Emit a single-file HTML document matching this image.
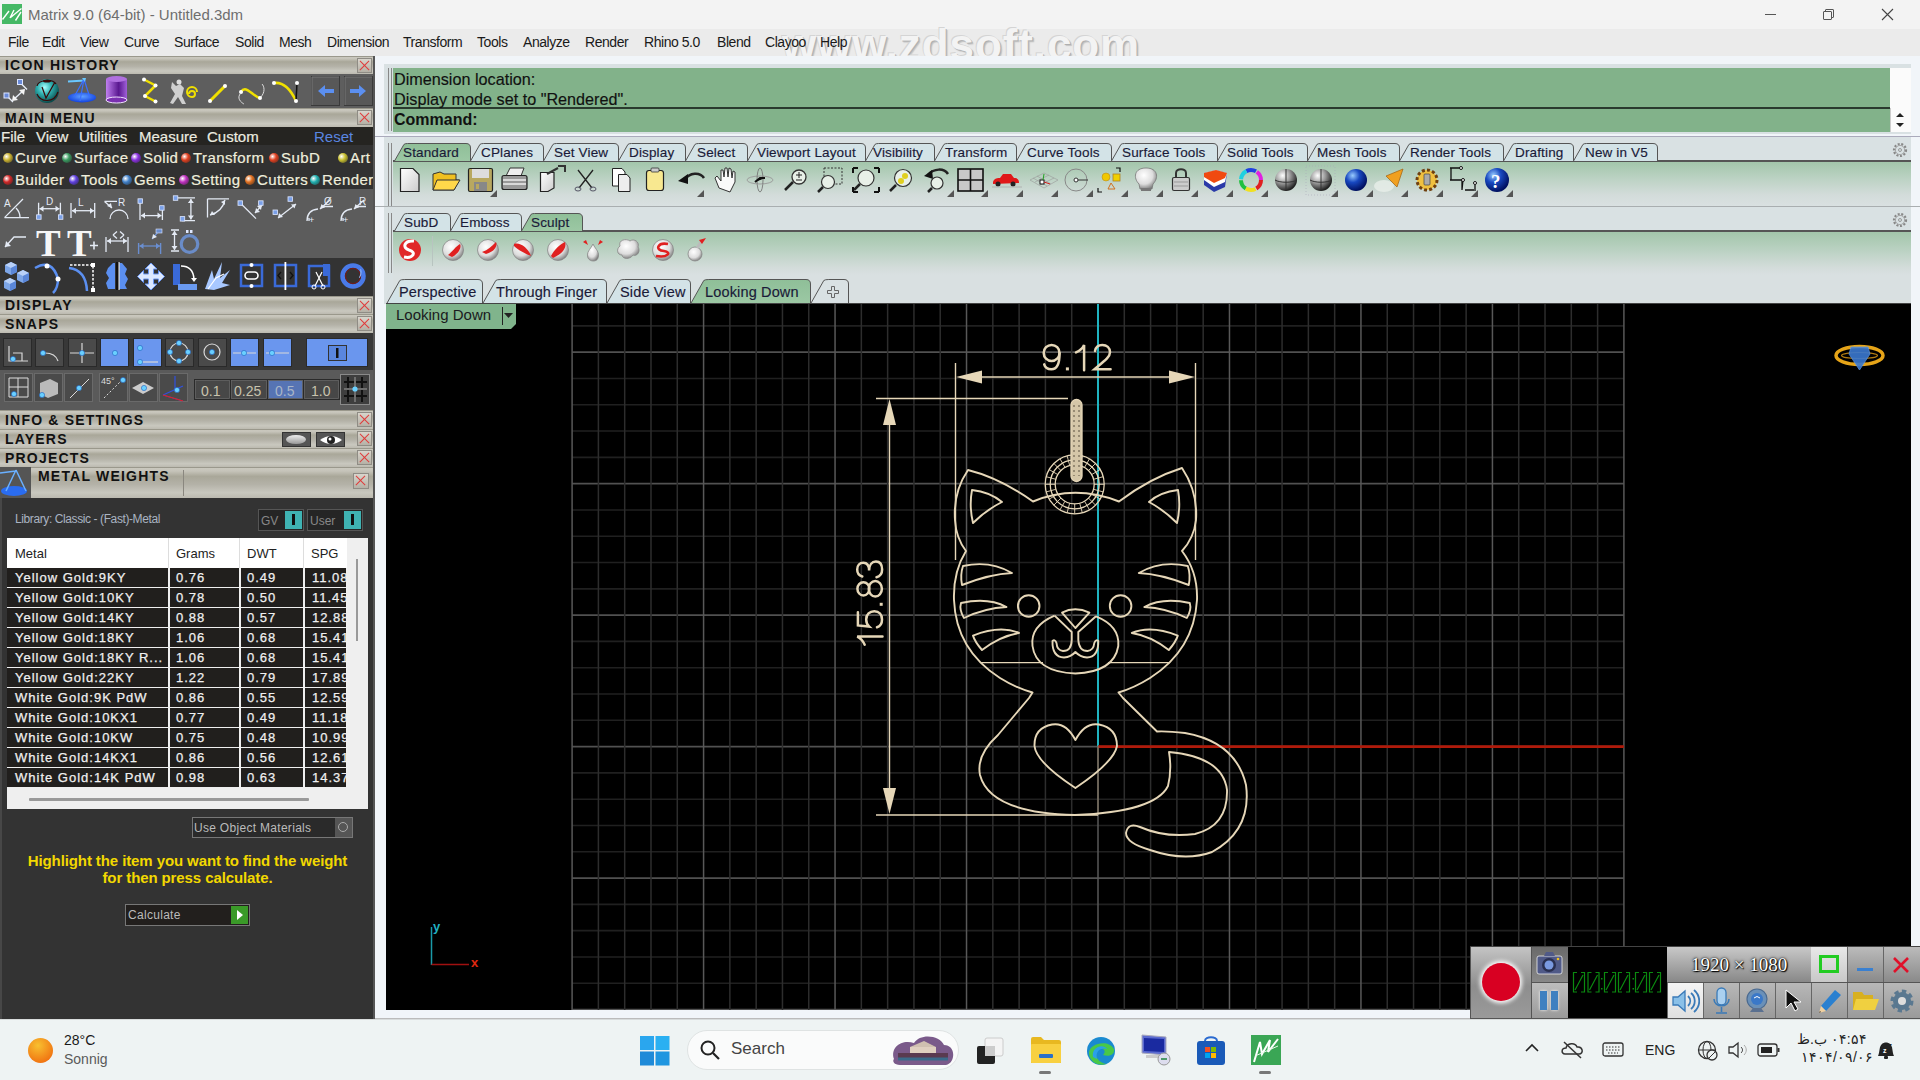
<!DOCTYPE html>
<html><head><meta charset="utf-8">
<style>
*{margin:0;padding:0;box-sizing:border-box}
html,body{width:1920px;height:1080px;overflow:hidden;background:#f3f3f3;font-family:"Liberation Sans",sans-serif;position:relative}
.a{position:absolute}
.t{position:absolute;white-space:nowrap}
.hdr{position:absolute;left:0;width:375px;background:linear-gradient(#cac8be 0,#c6c4ba 10%,#a9a799 28%,#b4b2a8 55%,#c9c8bf 82%,#bcbab0 100%);font-weight:bold;font-size:14px;color:#111;padding-left:5px;letter-spacing:1.2px;border-top:1px solid #9a988c}
.xb{position:absolute;width:15px;height:15px;border:1px solid #8f8c85;background:linear-gradient(#d8d5cc,#b5b1a6)}
.xb:before,.xb:after{content:"";position:absolute;left:0px;top:6px;width:13px;height:1.2px;background:#e03a3a;transform:rotate(45deg)}
.xb:after{transform:rotate(-45deg)}
.mi{position:absolute;top:34px;font-size:14px;letter-spacing:-0.45px;color:#1a1a1a}
</style></head><body>
<div class="a" style="left:0;top:0;width:1920px;height:29px;background:#f3f3f3"></div>
<svg class="a" style="left:0;top:0" width="26" height="28"><rect x="2" y="4" width="20" height="20" fill="#45b865"/><path d="M2.5 19.5 L9 11 M10 18 L14 10 M10.5 17.5 L21.5 8.5 M15.5 20.5 L21 12" stroke="#fff" stroke-width="1.4" fill="none"/></svg>
<div class="t" style="left:28px;top:6px;font-size:15px;color:#6e6e6e">Matrix 9.0 (64-bit) - Untitled.3dm</div>
<div class="a" style="left:1765px;top:14px;width:11px;height:1px;background:#555"></div>
<div class="a" style="left:1825px;top:9px;width:9px;height:9px;border:1px solid #555;border-radius:1px"></div>
<div class="a" style="left:1823px;top:11px;width:9px;height:9px;border:1px solid #555;background:#f3f3f3;border-radius:1px"></div>
<svg class="a" style="left:1881px;top:8px" width="13" height="13"><path d="M1 1L12 12M12 1L1 12" stroke="#444" stroke-width="1.1"/></svg>
<div class="a" style="left:0;top:29px;width:1920px;height:27px;background:#ebebeb"></div>
<div class="t" style="left:782px;top:20px;font-size:44px;font-weight:bold;color:#f3f3f3;letter-spacing:0.9px;text-shadow:1px 1px 0 #b0b0b0,-1px -1px 0 #d4d4d4,2px 2px 1px #c4c4c4">www.zdsoft.com</div>
<div class="mi" style="left:8px">File</div>
<div class="mi" style="left:42px">Edit</div>
<div class="mi" style="left:80px">View</div>
<div class="mi" style="left:124px">Curve</div>
<div class="mi" style="left:174px">Surface</div>
<div class="mi" style="left:235px">Solid</div>
<div class="mi" style="left:279px">Mesh</div>
<div class="mi" style="left:327px">Dimension</div>
<div class="mi" style="left:403px">Transform</div>
<div class="mi" style="left:477px">Tools</div>
<div class="mi" style="left:523px">Analyze</div>
<div class="mi" style="left:585px">Render</div>
<div class="mi" style="left:644px">Rhino 5.0</div>
<div class="mi" style="left:717px">Blend</div>
<div class="mi" style="left:765px">Clayoo</div>
<div class="mi" style="left:820px">Help</div>
<div class="a" style="left:0;top:56px;width:375px;height:963px;background:#333"></div>
<div class="hdr" style="top:56px;height:18px;line-height:17px">ICON HISTORY</div><div class="xb" style="left:357px;top:58px"></div>
<div class="a" style="left:0;top:74px;width:375px;height:34px;background:#5e5e5e"></div>
<svg class="a" style="left:0;top:74px" width="375" height="34">
<defs><radialGradient id="tealg" cx="40%" cy="35%" r="65%"><stop offset="0" stop-color="#a8ffff"/><stop offset="0.45" stop-color="#30b0b0"/><stop offset="1" stop-color="#0a4a4a"/></radialGradient>
<linearGradient id="purg" x1="0" x2="1"><stop offset="0" stop-color="#c080f0"/><stop offset="0.6" stop-color="#5a1890"/><stop offset="1" stop-color="#a060d8"/></linearGradient>
<radialGradient id="blug" cx="50%" cy="40%" r="60%"><stop offset="0" stop-color="#60a0ff"/><stop offset="1" stop-color="#1040e0"/></radialGradient></defs>
<g stroke="#e8eef8" stroke-width="1.4" fill="none"><path d="M13 26 L24 16"/><path d="M21 9.5 L27 15.5 M8 23 L13 28"/></g>
<path d="M12 27 l1 -6 l5 5Z M25 15 l-6 1 l5 5Z" fill="#f4f4f4"/>
<rect x="17.5" y="5.5" width="5" height="5" fill="#6a8ad8" stroke="#dde6ff"/><rect x="4" y="19" width="5" height="5" fill="#6a8ad8" stroke="#dde6ff"/>
<circle cx="47" cy="17" r="12" fill="url(#tealg)"/><path d="M37 12 C38 6, 52 4, 56 10 M42 13 L46 24 L55 8 M37 20 C40 28, 54 30, 58 18" stroke="#3a0808" stroke-width="1.2" fill="none"/><ellipse cx="47" cy="7" rx="4" ry="1.5" fill="#3a0808"/>
<ellipse cx="82" cy="23.5" rx="14" ry="5" fill="url(#blug)"/><path d="M68 7.5 L85 6.5" stroke="#6ac8ff" stroke-width="2.2"/><path d="M84 5 L74 23 M84 5 L90 24 M84 5 L80 27" stroke="#3a70ff" stroke-width="1.2" fill="none"/><path d="M82 4 L86 4 L85 8Z" fill="#6ac8ff"/>
<rect x="106" y="5" width="21" height="21" fill="url(#purg)"/><ellipse cx="116.5" cy="5" rx="10.5" ry="3" fill="#b070e0"/><ellipse cx="116.5" cy="26" rx="10.5" ry="3" fill="#7a30b0" stroke="#f0e0ff" stroke-width="1"/>
<path d="M144 5.5 L155.5 11.5 L145 22 L155.5 27.5" stroke="#f0e000" stroke-width="2.5" fill="none"/><circle cx="144" cy="5.5" r="2" fill="#fff"/><circle cx="155.5" cy="11.5" r="2" fill="#fff"/><circle cx="145" cy="22" r="2" fill="#fff"/><circle cx="155.5" cy="27.5" r="2" fill="#fff"/>
<path d="M172 8 L176 12 L180 10 L184 14 L182 22 L186 30 L182 30 L178 23 L173 30 L170 29 L175 20 L171 14Z" fill="#cfcfcf"/><circle cx="179" cy="8" r="2.5" fill="#ddd"/><path d="M192 20 m-3 0 a3 3 0 1 1 3 3 a5 5 0 1 1 5 -5" stroke="#f0e000" stroke-width="2" fill="none"/>
<path d="M210 27 L225 12" stroke="#f0e000" stroke-width="3"/><circle cx="210" cy="27" r="2" fill="#fff"/><circle cx="225" cy="12" r="2" fill="#fff"/>
<path d="M241 18 C246 10, 252 22, 260 24" stroke="#f0e000" stroke-width="2.5" fill="none"/><path d="M240 20 C236 26, 244 30, 244 30 M260 24 C266 18, 264 12, 262 10" stroke="#ddd" stroke-width="1" fill="none"/><circle cx="241" cy="18" r="2" fill="#fff"/><circle cx="260" cy="24" r="2" fill="#fff"/>
<path d="M274 9 C282 8, 290 14, 296 27" stroke="#f0e000" stroke-width="2.5" fill="none"/><path d="M297 9 L296 27" stroke="#111" stroke-width="1.5"/><circle cx="274" cy="9" r="2" fill="#fff"/><circle cx="297" cy="9" r="2" fill="#fff"/><circle cx="296" cy="27" r="2" fill="#fff"/>
<rect x="311.5" y="2.5" width="28" height="29" fill="#585858" stroke="#3a3a3a"/><rect x="344.5" y="2.5" width="28" height="29" fill="#585858" stroke="#3a3a3a"/>
<path d="M312 3 H339 M312 3 V31" stroke="#777" stroke-width="1"/><path d="M345 3 H372 M345 3 V31" stroke="#777" stroke-width="1"/>
<path d="M318 17 L325 11 L325 15 L334 15 L334 19 L325 19 L325 23 Z" fill="#5b8ff0"/>
<path d="M366 17 L359 11 L359 15 L350 15 L350 19 L359 19 L359 23 Z" fill="#5b8ff0"/>
</svg>
<div class="hdr" style="top:108px;height:19px;line-height:18px"><span style="font-family:'Liberation Sans';font-weight:900;font-size:14px;letter-spacing:1.1px">MAIN MENU</span></div><div class="xb" style="left:357px;top:110px"></div>
<div class="a" style="left:0;top:127px;width:375px;height:18px;background:#252421"></div>
<div class="t" style="left:1px;top:128px;font-size:15px;color:#ecece0;-webkit-text-stroke:0.2px #ecece0">File</div>
<div class="t" style="left:36px;top:128px;font-size:15px;color:#ecece0;-webkit-text-stroke:0.2px #ecece0">View</div>
<div class="t" style="left:79px;top:128px;font-size:15px;color:#ecece0;-webkit-text-stroke:0.2px #ecece0">Utilities</div>
<div class="t" style="left:139px;top:128px;font-size:15px;color:#ecece0;-webkit-text-stroke:0.2px #ecece0">Measure</div>
<div class="t" style="left:207px;top:128px;font-size:15px;color:#ecece0;-webkit-text-stroke:0.2px #ecece0">Custom</div>
<div class="t" style="left:314px;top:128px;font-size:15px;color:#5a86e0">Reset</div>
<div class="a" style="left:0;top:145px;width:375px;height:44px;background:#313131"></div>
<div class="a" style="left:3px;top:153px;width:10px;height:10px;border-radius:50%;background:radial-gradient(circle at 35% 35%,#fff 0,#c8b030 40%,#222 110%)"></div>
<div class="t" style="left:15px;top:149px;font-size:15px;letter-spacing:0.4px;color:#efeedc;-webkit-text-stroke:0.2px #efeedc">Curve</div>
<div class="a" style="left:62px;top:153px;width:10px;height:10px;border-radius:50%;background:radial-gradient(circle at 35% 35%,#fff 0,#3a9a60 40%,#222 110%)"></div>
<div class="t" style="left:74px;top:149px;font-size:15px;letter-spacing:0.4px;color:#efeedc;-webkit-text-stroke:0.2px #efeedc">Surface</div>
<div class="a" style="left:131px;top:153px;width:10px;height:10px;border-radius:50%;background:radial-gradient(circle at 35% 35%,#fff 0,#8a30e0 40%,#222 110%)"></div>
<div class="t" style="left:143px;top:149px;font-size:15px;letter-spacing:0.4px;color:#efeedc;-webkit-text-stroke:0.2px #efeedc">Solid</div>
<div class="a" style="left:181px;top:153px;width:10px;height:10px;border-radius:50%;background:radial-gradient(circle at 35% 35%,#fff 0,#e04020 40%,#222 110%)"></div>
<div class="t" style="left:193px;top:149px;font-size:15px;letter-spacing:0.4px;color:#efeedc;-webkit-text-stroke:0.2px #efeedc">Transform</div>
<div class="a" style="left:269px;top:153px;width:10px;height:10px;border-radius:50%;background:radial-gradient(circle at 35% 35%,#fff 0,#e04020 40%,#222 110%)"></div>
<div class="t" style="left:281px;top:149px;font-size:15px;letter-spacing:0.4px;color:#efeedc;-webkit-text-stroke:0.2px #efeedc">SubD</div>
<div class="a" style="left:338px;top:153px;width:10px;height:10px;border-radius:50%;background:radial-gradient(circle at 35% 35%,#fff 0,#c8c030 40%,#222 110%)"></div>
<div class="t" style="left:350px;top:149px;font-size:15px;letter-spacing:0.4px;color:#efeedc;-webkit-text-stroke:0.2px #efeedc">Art</div>
<div class="a" style="left:3px;top:175px;width:10px;height:10px;border-radius:50%;background:radial-gradient(circle at 35% 35%,#fff 0,#d02828 40%,#222 110%)"></div>
<div class="t" style="left:15px;top:171px;font-size:15px;letter-spacing:0.4px;color:#efeedc;-webkit-text-stroke:0.2px #efeedc">Builder</div>
<div class="a" style="left:69px;top:175px;width:10px;height:10px;border-radius:50%;background:radial-gradient(circle at 35% 35%,#fff 0,#6040e0 40%,#222 110%)"></div>
<div class="t" style="left:81px;top:171px;font-size:15px;letter-spacing:0.4px;color:#efeedc;-webkit-text-stroke:0.2px #efeedc">Tools</div>
<div class="a" style="left:122px;top:175px;width:10px;height:10px;border-radius:50%;background:radial-gradient(circle at 35% 35%,#fff 0,#4080c8 40%,#222 110%)"></div>
<div class="t" style="left:134px;top:171px;font-size:15px;letter-spacing:0.4px;color:#efeedc;-webkit-text-stroke:0.2px #efeedc">Gems</div>
<div class="a" style="left:179px;top:175px;width:10px;height:10px;border-radius:50%;background:radial-gradient(circle at 35% 35%,#fff 0,#c030c0 40%,#222 110%)"></div>
<div class="t" style="left:191px;top:171px;font-size:15px;letter-spacing:0.4px;color:#efeedc;-webkit-text-stroke:0.2px #efeedc">Setting</div>
<div class="a" style="left:245px;top:175px;width:10px;height:10px;border-radius:50%;background:radial-gradient(circle at 35% 35%,#fff 0,#e07020 40%,#222 110%)"></div>
<div class="t" style="left:257px;top:171px;font-size:15px;letter-spacing:0.4px;color:#efeedc;-webkit-text-stroke:0.2px #efeedc">Cutters</div>
<div class="a" style="left:310px;top:175px;width:10px;height:10px;border-radius:50%;background:radial-gradient(circle at 35% 35%,#fff 0,#20b0b0 40%,#222 110%)"></div>
<div class="t" style="left:322px;top:171px;font-size:15px;letter-spacing:0.4px;color:#efeedc;-webkit-text-stroke:0.2px #efeedc">Render</div>
<div class="a" style="left:0;top:189px;width:375px;height:69px;background:#5c5c5c"></div>
<div class="a" style="left:0;top:258px;width:375px;height:38px;background:#333"></div>
<svg class="a" style="left:0;top:189px" width="375" height="107"><g transform="translate(0,-189)"><g stroke="#e4eaf4" stroke-width="1.3" fill="none"><path d="M4.5 217.6 H29 M4.5 217.6 L23 199 M16 208 Q20 212 20 217.6"/><path d="M38.6 202.8 V218.6 M60.4 202.8 V218.6"/><path d="M71 203 V218 M94.7 203 V218"/><path d="M104.5 201.4 H117 M104.5 201.4 L112 208 M110 219 A8.5 8.5 0 0 1 128 219"/><path d="M140 203 V220 M162.4 207.7 V220"/><path d="M176 197.8 H195 M182 220.6 H195"/><path d="M207.5 198.8 V217.6 M207.5 198.8 H229 M210 215 Q222 212 225 200"/><path d="M240 202.8 L256 218.6"/><path d="M307 221 Q307 210 318 209 M309 221 V218 M341 221 Q341 210 352 209 M343 221 V218 M322 206.5 H333 M356 206.5 H366"/><path d="M5 247 L14 237 H26"/><path d="M106 237 V252 M128 237 V252 M113 235 L117 231.5 M113 235 L117 238.5 M124 235 L120 231.5 M124 235 L120 238.5"/><path d="M171 230 H179 M171 251 H179"/></g><path d="M39.5 208.7 H59.5" stroke="#e4eaf4" stroke-width="1.3"/><path d="M39.5 208.7 l4 -3 v6Z M59.5 208.7 l-4 -3 v6Z" fill="#e4eaf4"/><path d="M72 210.7 H94" stroke="#e4eaf4" stroke-width="1.3"/><path d="M72 210.7 l4 -3 v6Z M94 210.7 l-4 -3 v6Z" fill="#e4eaf4"/><path d="M141 215.6 H161.5" stroke="#e4eaf4" stroke-width="1.3"/><path d="M141 215.6 l4 -3 v6Z M161.5 215.6 l-4 -3 v6Z" fill="#e4eaf4"/><path d="M190.9 199 V219.6" stroke="#e4eaf4" stroke-width="1.3"/><path d="M190.9 199 l-3 4 h6Z M190.9 219.6 l-3 -4 h6Z" fill="#e4eaf4"/><path d="M112 208 l-1 -5 l-4 3Z" fill="#e4eaf4"/><path d="M210 215 l5 0 l-3 -4Z M225 200 l-4 2 l4 3Z" fill="#e4eaf4"/><path d="M255 213 L262 205" stroke="#e4eaf4" stroke-width="1.3"/><path d="M262 205 l-5 1 l4 4Z M255 213 l1 -5 l4 4Z" fill="#e4eaf4"/><path d="M278 218 L296 204" stroke="#e4eaf4" stroke-width="1.3"/><path d="M296 204 l-5 0.5 l3.5 4Z M278 218 l1 -5 l4 4Z" fill="#e4eaf4"/><path d="M320 209 L330 200" stroke="#e4eaf4" stroke-width="1.3"/><path d="M320 209 l1.5 -5 l3.5 3.5Z" fill="#e4eaf4"/><path d="M354 209 L364 200" stroke="#e4eaf4" stroke-width="1.3"/><path d="M354 209 l1.5 -5 l3.5 3.5Z" fill="#e4eaf4"/><rect x="36.6" y="214.8" width="4.5" height="4.5" fill="#7aa0e8" stroke="#dfe8ff" stroke-width="0.8"/><rect x="58.4" y="214.8" width="4.5" height="4.5" fill="#7aa0e8" stroke="#dfe8ff" stroke-width="0.8"/><rect x="138" y="198.8" width="4.5" height="4.5" fill="#7aa0e8" stroke="#dfe8ff" stroke-width="0.8"/><rect x="159.6" y="205.7" width="4.5" height="4.5" fill="#7aa0e8" stroke="#dfe8ff" stroke-width="0.8"/><rect x="173.3" y="195.8" width="4.5" height="4.5" fill="#7aa0e8" stroke="#dfe8ff" stroke-width="0.8"/><rect x="180.2" y="216.6" width="4.5" height="4.5" fill="#7aa0e8" stroke="#dfe8ff" stroke-width="0.8"/><rect x="238" y="200.8" width="4.5" height="4.5" fill="#7aa0e8" stroke="#dfe8ff" stroke-width="0.8"/><rect x="258.6" y="200.8" width="4.5" height="4.5" fill="#7aa0e8" stroke="#dfe8ff" stroke-width="0.8"/><rect x="273" y="210" width="4.5" height="4.5" fill="#7aa0e8" stroke="#dfe8ff" stroke-width="0.8"/><rect x="288" y="196.8" width="4.5" height="4.5" fill="#7aa0e8" stroke="#dfe8ff" stroke-width="0.8"/><g fill="#e4eaf4" font-family="Liberation Sans" font-size="10"><text x="4" y="207">A</text><text x="46" y="205">D</text><text x="78" y="206">L</text><text x="118" y="206">R</text><text x="324" y="205">Ø</text><text x="359" y="205">R</text><text x="309" y="223" font-size="9">+</text><text x="343" y="223" font-size="9">+</text></g><path d="M5 247 l1 -6 l5 5Z" fill="#e4eaf4"/><g fill="#f6f6f6" font-family="Liberation Serif" font-weight="bold"><text x="36" y="256" font-size="37">T</text><text x="67" y="256" font-size="37">T</text></g><path d="M90 245.5 H98 M94 241.5 V249.5" stroke="#e4eaf4" stroke-width="1.6"/><path d="M107 241 H127" stroke="#e4eaf4" stroke-width="1.3"/><path d="M107 241 l4 -3 v6Z M127 241 l-4 -3 v6Z" fill="#e4eaf4"/><path d="M138.6 243 V254 M160.6 243 V254 M152 239 L158 232" stroke="#6a8ed0" stroke-width="1.4"/><path d="M139.5 246 H160" stroke="#6a8ed0" stroke-width="1.3"/><path d="M139.5 246 l4 -3 v6Z M160 246 l-4 -3 v6Z" fill="#6a8ed0"/><rect x="156" y="229" width="6" height="4" fill="#6a8ed0" stroke="#dfe8ff" stroke-width="0.6"/><path d="M152 239 l1 -5 l4 3Z" fill="#e4eaf4"/><path d="M174.5 231 V250" stroke="#e4eaf4" stroke-width="1.3"/><path d="M174.5 231 l-3 4 h6Z M174.5 250 l-3 -4 h6Z" fill="#e4eaf4"/><circle cx="189.5" cy="244" r="8.3" fill="none" stroke="#6a8cc8" stroke-width="3.2"/><rect x="186" y="230" width="2.5" height="3" fill="#dfe8ff"/><rect x="190" y="230" width="2.5" height="3" fill="#dfe8ff"/><g transform="translate(0,0)"><path d="M5 265 L11 262 L17 265 L17 272 L11 275 L5 272Z" fill="#7da6e8"/><path d="M5 265 L11 262 L17 265 L11 268Z" fill="#b8d0f8"/><path d="M11 268 L17 265 L17 272 L11 275Z" fill="#5a86d8"/><path d="M17 273 L23 270 L29 273 L29 280 L23 283 L17 280Z" fill="#7da6e8"/><path d="M17 273 L23 270 L29 273 L23 276Z" fill="#b8d0f8"/><path d="M23 276 L29 273 L29 280 L23 283Z" fill="#5a86d8"/><path d="M4 281 L10 278 L16 281 L16 288 L10 291 L4 288Z" fill="#7da6e8"/><path d="M4 281 L10 278 L16 281 L10 284Z" fill="#b8d0f8"/><path d="M10 284 L16 281 L16 288 L10 291Z" fill="#5a86d8"/><path d="M35 268 Q52 258 58 279 Q58 288 53 293" stroke="#5b8ff0" stroke-width="2.5" fill="none"/><circle cx="47" cy="266" r="2.5" fill="#fff"/><circle cx="58" cy="279" r="2.5" fill="#fff"/><path d="M69 268 Q86 270 87 291" stroke="#5b8ff0" stroke-width="2.5" fill="none"/><path d="M70 265 H93 V290" stroke="#fff" stroke-width="1.5" stroke-dasharray="2.5 1.5" fill="none"/><rect x="91" y="263" width="4" height="4" fill="#fff"/><rect x="91" y="288" width="4" height="4" fill="#fff"/><path d="M108 268 L113 263 L115 263 L115 289 L108 289 L106 283 L109 278 L106 273Z M119 263 L122 263 L127 269 L125 274 L128 279 L125 285 L127 289 L119 289Z" fill="#5b8ff0"/><rect x="116" y="262" width="2.2" height="28" fill="#111"/><rect x="118.5" y="262" width="1.2" height="28" fill="#ddd"/><path d="M151 263 L157 269 L153.5 269 L153.5 274 L158.5 274 L158.5 270.5 L164.5 276.5 L158.5 282.5 L158.5 279 L153.5 279 L153.5 284 L157 284 L151 290 L145 284 L148.5 284 L148.5 279 L143.5 279 L143.5 282.5 L137.5 276.5 L143.5 270.5 L143.5 274 L148.5 274 L148.5 269 L145 269Z" fill="#dce8ff" stroke="#6a96f0" stroke-width="1"/><rect x="173" y="264" width="7" height="21" fill="#3a6ad8"/><rect x="178" y="284" width="19" height="6" fill="#6a9af0"/><path d="M181 266 Q193 266 194 279" stroke="#fff" stroke-width="1.5" fill="none"/><path d="M194 282 l-3 -4 h6Z" fill="#fff"/><path d="M205 289 L212 270 L214 279 L222 262 L220 278 L230 270 L222 283 L230 285 L214 290Z" fill="#a8c8ff"/><path d="M208 289 L216 278 L224 274" stroke="#fff" stroke-width="1.2" fill="none"/><rect x="241" y="265" width="21" height="21" fill="none" stroke="#3a6ad8" stroke-width="2.5"/><rect x="245" y="272" width="13" height="7" rx="3.5" fill="none" stroke="#fff" stroke-width="1.6"/><circle cx="251.5" cy="265" r="2" fill="#fff"/><circle cx="251.5" cy="286" r="2" fill="#fff"/><rect x="275" y="265" width="21" height="21" fill="none" stroke="#3a6ad8" stroke-width="2.5"/><rect x="284.5" y="262" width="1.8" height="28" fill="#fff"/><path d="M281 272 L278 275.5 L281 279 M290 272 L293 275.5 L290 279" stroke="#111" stroke-width="1.3" fill="none"/><rect x="309" y="266" width="20" height="20" fill="none" stroke="#3a6ad8" stroke-width="2.5"/><rect x="323" y="264" width="7" height="12" fill="#3a6ad8"/><path d="M316 272 L323 286 M322 272 L315 286" stroke="#fff" stroke-width="1.2"/><circle cx="314" cy="287" r="2" fill="none" stroke="#fff"/><circle cx="323" cy="287" r="2" fill="none" stroke="#fff"/><circle cx="353" cy="276" r="10.5" fill="none" stroke="#4a7ae8" stroke-width="4.5"/><circle cx="353" cy="276" r="7.5" fill="none" stroke="#7a1818" stroke-width="1"/><circle cx="350" cy="272" r="11" fill="none" stroke="#9cc0ff" stroke-width="1" stroke-dasharray="6 60"/></g></g></svg>
<div class="hdr" style="top:296px;height:18px;line-height:17px">DISPLAY</div><div class="xb" style="left:357px;top:298px"></div>
<div class="hdr" style="top:314px;height:19px;line-height:18px">SNAPS</div><div class="xb" style="left:357px;top:316px"></div>
<div class="a" style="left:0;top:333px;width:375px;height:37px;background:#383838"></div>
<div class="a" style="left:0;top:370px;width:375px;height:40px;background:#5a5a5a"></div>
<svg class="a" style="left:0;top:333px" width="375" height="77"><rect x="3.5" y="5.5" width="28" height="28" fill="#4a4a4a" stroke="#2a2a2a"/><rect x="35.5" y="5.5" width="28" height="28" fill="#4a4a4a" stroke="#2a2a2a"/><rect x="68.5" y="5.5" width="28" height="28" fill="#4a4a4a" stroke="#2a2a2a"/><rect x="100.5" y="5.5" width="28" height="28" fill="#6a96ee" stroke="#2a2a2a"/><rect x="133.5" y="5.5" width="28" height="28" fill="#6a96ee" stroke="#2a2a2a"/><rect x="165.5" y="5.5" width="28" height="28" fill="#4a4a4a" stroke="#2a2a2a"/><rect x="198.5" y="5.5" width="28" height="28" fill="#4a4a4a" stroke="#2a2a2a"/><rect x="230.5" y="5.5" width="28" height="28" fill="#6a96ee" stroke="#2a2a2a"/><rect x="263.5" y="5.5" width="28" height="28" fill="#6a96ee" stroke="#2a2a2a"/><rect x="306.5" y="5.5" width="61" height="28" fill="#6a96ee" stroke="#2a2a2a"/><rect x="328.5" y="12.5" width="18" height="15" fill="#5a86de" stroke="#333"/><rect x="336" y="15" width="2.5" height="10" fill="#111"/><g stroke="#d8d8d8" stroke-width="1.2" fill="none"><path d="M9 13 L9 28 L28 28 M13 20 L22 20 L22 28" /><path d="M45 20 C52 20, 56 22, 58 28"/><path d="M82 10 L82 30 M70 20 L94 20"/><path d="M140 29 L158 29"/><circle cx="179" cy="19" r="9"/><circle cx="212" cy="19" r="8"/><path d="M233 20 L256 20 M266 20 L289 20"/></g><circle cx="13" cy="26" r="2.6" fill="#6ad0ff" stroke="#2060c0" stroke-width="0.6"/><circle cx="43" cy="20" r="2.6" fill="#6ad0ff" stroke="#2060c0" stroke-width="0.6"/><circle cx="82" cy="20" r="2.6" fill="#6ad0ff" stroke="#2060c0" stroke-width="0.6"/><circle cx="115" cy="20" r="2.6" fill="#6ad0ff" stroke="#2060c0" stroke-width="0.6"/><circle cx="140" cy="15" r="2.6" fill="#6ad0ff" stroke="#2060c0" stroke-width="0.6"/><circle cx="140" cy="29" r="2.6" fill="#6ad0ff" stroke="#2060c0" stroke-width="0.6"/><circle cx="179" cy="10" r="2.6" fill="#6ad0ff" stroke="#2060c0" stroke-width="0.6"/><circle cx="179" cy="28" r="2.6" fill="#6ad0ff" stroke="#2060c0" stroke-width="0.6"/><circle cx="170" cy="19" r="2.6" fill="#6ad0ff" stroke="#2060c0" stroke-width="0.6"/><circle cx="188" cy="19" r="2.6" fill="#6ad0ff" stroke="#2060c0" stroke-width="0.6"/><circle cx="212" cy="19" r="2.6" fill="#6ad0ff" stroke="#2060c0" stroke-width="0.6"/><circle cx="244" cy="20" r="2.6" fill="#6ad0ff" stroke="#2060c0" stroke-width="0.6"/><circle cx="272" cy="20" r="2.6" fill="#6ad0ff" stroke="#2060c0" stroke-width="0.6"/><g transform="translate(0,37)"><rect x="4.5" y="3.5" width="28" height="28" fill="#4a4a4a" stroke="#6a6a6a"/><rect x="34.5" y="3.5" width="28" height="28" fill="#4a4a4a" stroke="#6a6a6a"/><rect x="64.5" y="3.5" width="28" height="28" fill="#4a4a4a" stroke="#6a6a6a"/><rect x="99.5" y="3.5" width="28" height="28" fill="#4a4a4a" stroke="#6a6a6a"/><rect x="129.5" y="3.5" width="28" height="28" fill="#4a4a4a" stroke="#6a6a6a"/><rect x="159.5" y="3.5" width="28" height="28" fill="#4a4a4a" stroke="#6a6a6a"/><path d="M9 8 L28 8 L28 27 L9 27 Z M18 8 L18 27 M9 17 L28 17" stroke="#ddd" fill="none"/><path d="M40 13 L50 9 L58 13 L58 24 L48 28 L40 24 Z" fill="#bbb"/><path d="M70 28 L89 9" stroke="#ddd"/><path d="M104 28 L123 9" stroke="#ddd" stroke-dasharray="2 2"/><text x="101" y="14" font-size="9" fill="#ddd" font-family="Liberation Sans">45°</text><path d="M132 18 L143 12 L154 18 L143 24 Z" fill="#ccc"/><path d="M163 25 L183 16 M163 25 L183 31 M175 6 L175 20" stroke-width="1.2" fill="none" stroke="#3050e0"/><path d="M163 25 L183 31" stroke="#e02020" stroke-width="1.3"/><circle cx="14" cy="24" r="2.6" fill="#6ad0ff" stroke="#2060c0" stroke-width="0.6"/><circle cx="42" cy="25" r="2.6" fill="#6ad0ff" stroke="#2060c0" stroke-width="0.6"/><circle cx="79" cy="18" r="2.6" fill="#6ad0ff" stroke="#2060c0" stroke-width="0.6"/><circle cx="123" cy="10" r="2.6" fill="#6ad0ff" stroke="#2060c0" stroke-width="0.6"/><circle cx="144" cy="18" r="2.6" fill="#6ad0ff" stroke="#2060c0" stroke-width="0.6"/><circle cx="177" cy="20" r="2.6" fill="#6ad0ff" stroke="#2060c0" stroke-width="0.6"/><rect x="194" y="9" width="146" height="21" fill="#2a2a2a"/><rect x="195.5" y="10.5" width="34" height="18" fill="#474747" stroke="#666" stroke-width="0.8"/><rect x="231.5" y="10.5" width="35" height="18" fill="#474747" stroke="#666" stroke-width="0.8"/><rect x="268.5" y="10.5" width="34" height="18" fill="#5674b4" stroke="#666" stroke-width="0.8"/><rect x="304.5" y="10.5" width="34" height="18" fill="#474747" stroke="#666" stroke-width="0.8"/><g font-family="Liberation Sans" font-size="14" fill="#c8c3ae"><text x="201" y="25.5">0.1</text><text x="234" y="25.5">0.25</text><text x="275" y="25.5" fill="#a9b6c8">0.5</text><text x="311" y="25.5">1.0</text></g><rect x="340.5" y="4.5" width="29" height="30" fill="#3e3e3e" stroke="#8a8a8a"/><path d="M344 12 L367 12 M344 19 L367 19 M344 26 L367 26 M348 7 L348 32 M355 7 L355 32 M362 7 L362 32" stroke="#111" stroke-width="2"/><path d="M344 19 H367 M355 7 V32" stroke="#ccc" stroke-width="1"/><circle cx="355" cy="19" r="2.6" fill="#6ad0ff"/></g></svg>
<div class="hdr" style="top:410px;height:19px;line-height:18px">INFO &amp; SETTINGS</div><div class="xb" style="left:357px;top:412px"></div>
<div class="hdr" style="top:429px;height:19px;line-height:18px">LAYERS</div><div class="xb" style="left:357px;top:431px"></div>
<div class="a" style="left:282px;top:432px;width:29px;height:15px;background:#555;border:1px solid #333"></div><div class="a" style="left:286px;top:435px;width:20px;height:9px;border-radius:50%;background:linear-gradient(#eee,#999)"></div>
<div class="a" style="left:316px;top:432px;width:29px;height:15px;background:#555;border:1px solid #333"></div><svg class="a" style="left:318px;top:433px" width="26" height="14"><path d="M2 7 Q13 -1 24 7 Q13 15 2 7Z" fill="#fff"/><circle cx="13" cy="7" r="4" fill="#222"/><circle cx="12" cy="6" r="1.5" fill="#fff"/></svg>
<div class="hdr" style="top:448px;height:19px;line-height:18px">PROJECTS</div><div class="xb" style="left:357px;top:450px"></div>
<div class="hdr" style="top:467px;height:31px;line-height:16px;padding-left:38px;font-size:14px">METAL WEIGHTS</div>
<div class="a" style="left:0;top:467px;width:31px;height:31px;background:#555"></div>
<svg class="a" style="left:0;top:467px" width="31" height="31"><ellipse cx="14" cy="24" rx="13" ry="5" fill="#2a6cf0"/><path d="M0 6 L16 4 M16 3 L6 24 M16 3 L26 24" stroke="#6ab0ff" stroke-width="1.5" fill="none"/></svg>
<div class="a" style="left:183px;top:470px;width:1px;height:26px;background:#8a877f"></div>
<div class="xb" style="left:353px;top:473px;width:16px;height:16px"></div>
<div class="a" style="left:0;top:498px;width:375px;height:521px;background:#333"></div>
<div class="a" style="left:0;top:498px;width:2px;height:521px;background:#474747"></div>
<div class="a" style="left:373px;top:56px;width:2px;height:963px;background:#555"></div>
<div class="t" style="left:15px;top:512px;font-size:12px;color:#aab4c2;letter-spacing:-0.4px">Library: Classic - (Fast)-Metal</div>
<div class="a" style="left:258px;top:509px;width:46px;height:22px;background:#252525;border:1px solid #555"></div><div class="t" style="left:261px;top:514px;font-size:12px;color:#888">GV</div><div class="a" style="left:285px;top:511px;width:17px;height:18px;background:#3fb3b3"></div><div class="a" style="left:292px;top:514px;width:3px;height:11px;background:#111"></div>
<div class="a" style="left:307px;top:509px;width:56px;height:22px;background:#252525;border:1px solid #555"></div><div class="t" style="left:310px;top:514px;font-size:12px;color:#888">User</div><div class="a" style="left:344px;top:511px;width:17px;height:18px;background:#3fb3b3"></div><div class="a" style="left:351px;top:514px;width:3px;height:11px;background:#111"></div>
<div class="a" style="left:7px;top:538px;width:361px;height:271px;background:#efefef"></div>
<div class="a" style="left:7px;top:538px;width:340px;height:30px;background:#fff"></div>
<div class="t" style="left:15px;top:546px;font-size:13px;color:#222">Metal</div>
<div class="t" style="left:176px;top:546px;font-size:13px;color:#222">Grams</div>
<div class="t" style="left:247px;top:546px;font-size:13px;color:#222">DWT</div>
<div class="t" style="left:311px;top:546px;font-size:13px;color:#222">SPG</div>
<div class="a" style="left:168px;top:538px;width:1px;height:30px;background:#ddd"></div>
<div class="a" style="left:239px;top:538px;width:1px;height:30px;background:#ddd"></div>
<div class="a" style="left:303px;top:538px;width:1px;height:30px;background:#ddd"></div>
<div class="a" style="left:7px;top:568px;width:161px;height:19px;background:#211f1d"></div>
<div class="a" style="left:170px;top:568px;width:69px;height:19px;background:#211f1d"></div>
<div class="a" style="left:241px;top:568px;width:62px;height:19px;background:#211f1d"></div>
<div class="a" style="left:305px;top:568px;width:41px;height:19px;background:#211f1d;overflow:hidden"><div class="t" style="left:7px;top:2px;font-size:13px;color:#f0f0f0;letter-spacing:1px;-webkit-text-stroke:0.25px #f0f0f0">11.08</div></div>
<div class="t" style="left:15px;top:570px;font-size:13px;color:#f0f0f0;letter-spacing:1px;-webkit-text-stroke:0.25px #f0f0f0">Yellow Gold:9KY</div>
<div class="t" style="left:176px;top:570px;font-size:13px;color:#f0f0f0;letter-spacing:1px;-webkit-text-stroke:0.25px #f0f0f0">0.76</div>
<div class="t" style="left:247px;top:570px;font-size:13px;color:#f0f0f0;letter-spacing:1px;-webkit-text-stroke:0.25px #f0f0f0">0.49</div>
<div class="a" style="left:7px;top:588px;width:161px;height:19px;background:#211f1d"></div>
<div class="a" style="left:170px;top:588px;width:69px;height:19px;background:#211f1d"></div>
<div class="a" style="left:241px;top:588px;width:62px;height:19px;background:#211f1d"></div>
<div class="a" style="left:305px;top:588px;width:41px;height:19px;background:#211f1d;overflow:hidden"><div class="t" style="left:7px;top:2px;font-size:13px;color:#f0f0f0;letter-spacing:1px;-webkit-text-stroke:0.25px #f0f0f0">11.45</div></div>
<div class="t" style="left:15px;top:590px;font-size:13px;color:#f0f0f0;letter-spacing:1px;-webkit-text-stroke:0.25px #f0f0f0">Yellow Gold:10KY</div>
<div class="t" style="left:176px;top:590px;font-size:13px;color:#f0f0f0;letter-spacing:1px;-webkit-text-stroke:0.25px #f0f0f0">0.78</div>
<div class="t" style="left:247px;top:590px;font-size:13px;color:#f0f0f0;letter-spacing:1px;-webkit-text-stroke:0.25px #f0f0f0">0.50</div>
<div class="a" style="left:7px;top:608px;width:161px;height:19px;background:#211f1d"></div>
<div class="a" style="left:170px;top:608px;width:69px;height:19px;background:#211f1d"></div>
<div class="a" style="left:241px;top:608px;width:62px;height:19px;background:#211f1d"></div>
<div class="a" style="left:305px;top:608px;width:41px;height:19px;background:#211f1d;overflow:hidden"><div class="t" style="left:7px;top:2px;font-size:13px;color:#f0f0f0;letter-spacing:1px;-webkit-text-stroke:0.25px #f0f0f0">12.88</div></div>
<div class="t" style="left:15px;top:610px;font-size:13px;color:#f0f0f0;letter-spacing:1px;-webkit-text-stroke:0.25px #f0f0f0">Yellow Gold:14KY</div>
<div class="t" style="left:176px;top:610px;font-size:13px;color:#f0f0f0;letter-spacing:1px;-webkit-text-stroke:0.25px #f0f0f0">0.88</div>
<div class="t" style="left:247px;top:610px;font-size:13px;color:#f0f0f0;letter-spacing:1px;-webkit-text-stroke:0.25px #f0f0f0">0.57</div>
<div class="a" style="left:7px;top:628px;width:161px;height:19px;background:#211f1d"></div>
<div class="a" style="left:170px;top:628px;width:69px;height:19px;background:#211f1d"></div>
<div class="a" style="left:241px;top:628px;width:62px;height:19px;background:#211f1d"></div>
<div class="a" style="left:305px;top:628px;width:41px;height:19px;background:#211f1d;overflow:hidden"><div class="t" style="left:7px;top:2px;font-size:13px;color:#f0f0f0;letter-spacing:1px;-webkit-text-stroke:0.25px #f0f0f0">15.41</div></div>
<div class="t" style="left:15px;top:630px;font-size:13px;color:#f0f0f0;letter-spacing:1px;-webkit-text-stroke:0.25px #f0f0f0">Yellow Gold:18KY</div>
<div class="t" style="left:176px;top:630px;font-size:13px;color:#f0f0f0;letter-spacing:1px;-webkit-text-stroke:0.25px #f0f0f0">1.06</div>
<div class="t" style="left:247px;top:630px;font-size:13px;color:#f0f0f0;letter-spacing:1px;-webkit-text-stroke:0.25px #f0f0f0">0.68</div>
<div class="a" style="left:7px;top:648px;width:161px;height:19px;background:#211f1d"></div>
<div class="a" style="left:170px;top:648px;width:69px;height:19px;background:#211f1d"></div>
<div class="a" style="left:241px;top:648px;width:62px;height:19px;background:#211f1d"></div>
<div class="a" style="left:305px;top:648px;width:41px;height:19px;background:#211f1d;overflow:hidden"><div class="t" style="left:7px;top:2px;font-size:13px;color:#f0f0f0;letter-spacing:1px;-webkit-text-stroke:0.25px #f0f0f0">15.41</div></div>
<div class="t" style="left:15px;top:650px;font-size:13px;color:#f0f0f0;letter-spacing:1px;-webkit-text-stroke:0.25px #f0f0f0">Yellow Gold:18KY R...</div>
<div class="t" style="left:176px;top:650px;font-size:13px;color:#f0f0f0;letter-spacing:1px;-webkit-text-stroke:0.25px #f0f0f0">1.06</div>
<div class="t" style="left:247px;top:650px;font-size:13px;color:#f0f0f0;letter-spacing:1px;-webkit-text-stroke:0.25px #f0f0f0">0.68</div>
<div class="a" style="left:7px;top:668px;width:161px;height:19px;background:#211f1d"></div>
<div class="a" style="left:170px;top:668px;width:69px;height:19px;background:#211f1d"></div>
<div class="a" style="left:241px;top:668px;width:62px;height:19px;background:#211f1d"></div>
<div class="a" style="left:305px;top:668px;width:41px;height:19px;background:#211f1d;overflow:hidden"><div class="t" style="left:7px;top:2px;font-size:13px;color:#f0f0f0;letter-spacing:1px;-webkit-text-stroke:0.25px #f0f0f0">17.89</div></div>
<div class="t" style="left:15px;top:670px;font-size:13px;color:#f0f0f0;letter-spacing:1px;-webkit-text-stroke:0.25px #f0f0f0">Yellow Gold:22KY</div>
<div class="t" style="left:176px;top:670px;font-size:13px;color:#f0f0f0;letter-spacing:1px;-webkit-text-stroke:0.25px #f0f0f0">1.22</div>
<div class="t" style="left:247px;top:670px;font-size:13px;color:#f0f0f0;letter-spacing:1px;-webkit-text-stroke:0.25px #f0f0f0">0.79</div>
<div class="a" style="left:7px;top:688px;width:161px;height:19px;background:#211f1d"></div>
<div class="a" style="left:170px;top:688px;width:69px;height:19px;background:#211f1d"></div>
<div class="a" style="left:241px;top:688px;width:62px;height:19px;background:#211f1d"></div>
<div class="a" style="left:305px;top:688px;width:41px;height:19px;background:#211f1d;overflow:hidden"><div class="t" style="left:7px;top:2px;font-size:13px;color:#f0f0f0;letter-spacing:1px;-webkit-text-stroke:0.25px #f0f0f0">12.59</div></div>
<div class="t" style="left:15px;top:690px;font-size:13px;color:#f0f0f0;letter-spacing:1px;-webkit-text-stroke:0.25px #f0f0f0">White Gold:9K PdW</div>
<div class="t" style="left:176px;top:690px;font-size:13px;color:#f0f0f0;letter-spacing:1px;-webkit-text-stroke:0.25px #f0f0f0">0.86</div>
<div class="t" style="left:247px;top:690px;font-size:13px;color:#f0f0f0;letter-spacing:1px;-webkit-text-stroke:0.25px #f0f0f0">0.55</div>
<div class="a" style="left:7px;top:708px;width:161px;height:19px;background:#211f1d"></div>
<div class="a" style="left:170px;top:708px;width:69px;height:19px;background:#211f1d"></div>
<div class="a" style="left:241px;top:708px;width:62px;height:19px;background:#211f1d"></div>
<div class="a" style="left:305px;top:708px;width:41px;height:19px;background:#211f1d;overflow:hidden"><div class="t" style="left:7px;top:2px;font-size:13px;color:#f0f0f0;letter-spacing:1px;-webkit-text-stroke:0.25px #f0f0f0">11.18</div></div>
<div class="t" style="left:15px;top:710px;font-size:13px;color:#f0f0f0;letter-spacing:1px;-webkit-text-stroke:0.25px #f0f0f0">White Gold:10KX1</div>
<div class="t" style="left:176px;top:710px;font-size:13px;color:#f0f0f0;letter-spacing:1px;-webkit-text-stroke:0.25px #f0f0f0">0.77</div>
<div class="t" style="left:247px;top:710px;font-size:13px;color:#f0f0f0;letter-spacing:1px;-webkit-text-stroke:0.25px #f0f0f0">0.49</div>
<div class="a" style="left:7px;top:728px;width:161px;height:19px;background:#211f1d"></div>
<div class="a" style="left:170px;top:728px;width:69px;height:19px;background:#211f1d"></div>
<div class="a" style="left:241px;top:728px;width:62px;height:19px;background:#211f1d"></div>
<div class="a" style="left:305px;top:728px;width:41px;height:19px;background:#211f1d;overflow:hidden"><div class="t" style="left:7px;top:2px;font-size:13px;color:#f0f0f0;letter-spacing:1px;-webkit-text-stroke:0.25px #f0f0f0">10.99</div></div>
<div class="t" style="left:15px;top:730px;font-size:13px;color:#f0f0f0;letter-spacing:1px;-webkit-text-stroke:0.25px #f0f0f0">White Gold:10KW</div>
<div class="t" style="left:176px;top:730px;font-size:13px;color:#f0f0f0;letter-spacing:1px;-webkit-text-stroke:0.25px #f0f0f0">0.75</div>
<div class="t" style="left:247px;top:730px;font-size:13px;color:#f0f0f0;letter-spacing:1px;-webkit-text-stroke:0.25px #f0f0f0">0.48</div>
<div class="a" style="left:7px;top:748px;width:161px;height:19px;background:#211f1d"></div>
<div class="a" style="left:170px;top:748px;width:69px;height:19px;background:#211f1d"></div>
<div class="a" style="left:241px;top:748px;width:62px;height:19px;background:#211f1d"></div>
<div class="a" style="left:305px;top:748px;width:41px;height:19px;background:#211f1d;overflow:hidden"><div class="t" style="left:7px;top:2px;font-size:13px;color:#f0f0f0;letter-spacing:1px;-webkit-text-stroke:0.25px #f0f0f0">12.61</div></div>
<div class="t" style="left:15px;top:750px;font-size:13px;color:#f0f0f0;letter-spacing:1px;-webkit-text-stroke:0.25px #f0f0f0">White Gold:14KX1</div>
<div class="t" style="left:176px;top:750px;font-size:13px;color:#f0f0f0;letter-spacing:1px;-webkit-text-stroke:0.25px #f0f0f0">0.86</div>
<div class="t" style="left:247px;top:750px;font-size:13px;color:#f0f0f0;letter-spacing:1px;-webkit-text-stroke:0.25px #f0f0f0">0.56</div>
<div class="a" style="left:7px;top:768px;width:161px;height:19px;background:#211f1d"></div>
<div class="a" style="left:170px;top:768px;width:69px;height:19px;background:#211f1d"></div>
<div class="a" style="left:241px;top:768px;width:62px;height:19px;background:#211f1d"></div>
<div class="a" style="left:305px;top:768px;width:41px;height:19px;background:#211f1d;overflow:hidden"><div class="t" style="left:7px;top:2px;font-size:13px;color:#f0f0f0;letter-spacing:1px;-webkit-text-stroke:0.25px #f0f0f0">14.37</div></div>
<div class="t" style="left:15px;top:770px;font-size:13px;color:#f0f0f0;letter-spacing:1px;-webkit-text-stroke:0.25px #f0f0f0">White Gold:14K PdW</div>
<div class="t" style="left:176px;top:770px;font-size:13px;color:#f0f0f0;letter-spacing:1px;-webkit-text-stroke:0.25px #f0f0f0">0.98</div>
<div class="t" style="left:247px;top:770px;font-size:13px;color:#f0f0f0;letter-spacing:1px;-webkit-text-stroke:0.25px #f0f0f0">0.63</div>
<div class="a" style="left:356px;top:559px;width:2px;height:82px;background:#999"></div>
<div class="a" style="left:29px;top:798px;width:280px;height:3px;background:#999;border-radius:1px"></div>
<div class="a" style="left:192px;top:817px;width:161px;height:21px;background:#2a2a2a;border:1px solid #777"></div>
<div class="t" style="left:194px;top:821px;font-size:12px;color:#bbb;letter-spacing:0.3px">Use Object Materials</div>
<div class="a" style="left:335px;top:818px;width:17px;height:19px;background:#555"></div><div class="a" style="left:338px;top:822px;width:10px;height:10px;border-radius:50%;border:1px solid #aaa"></div>
<div class="t" style="left:0;width:375px;top:852px;text-align:center;font-size:15px;font-weight:bold;color:#f2d800;line-height:17px;letter-spacing:-0.1px">Highlight the item you want to find the weight<br>for then press calculate.</div>
<div class="a" style="left:125px;top:904px;width:125px;height:22px;background:#221f1d;border:1px solid #777"></div>
<div class="t" style="left:128px;top:908px;font-size:12px;color:#bbb;letter-spacing:0.3px">Calculate</div>
<div class="a" style="left:231px;top:906px;width:17px;height:18px;background:#3a9a28"></div><svg class="a" style="left:236px;top:910px" width="8" height="10"><path d="M1 0 L7 5 L1 10Z" fill="#fff"/></svg>
<svg width="0" height="0" style="position:absolute"><defs><linearGradient id="tg" x1="0" y1="0" x2="0" y2="1"><stop offset="0" stop-color="#8fbf98"/><stop offset="1" stop-color="#9cc8a4"/></linearGradient></defs></svg>
<div class="a" style="left:375px;top:56px;width:1545px;height:963px;background:#f1f5f9"></div>
<div class="a" style="left:384px;top:64px;width:1527px;height:70px;background:#d9e1e3"></div>
<div class="a" style="left:388px;top:68px;width:1px;height:63px;background:#888"></div><div class="a" style="left:391px;top:68px;width:1px;height:63px;background:#888"></div>
<div class="a" style="left:393px;top:68px;width:1497px;height:64px;background:#82b28a"></div>
<div class="a" style="left:393px;top:107px;width:1497px;height:2px;background:#2a3a2e"></div>
<div class="t" style="left:394px;top:69px;font-size:16.2px;color:#111;line-height:20px;-webkit-text-stroke:0.15px #111">Dimension location:<br>Display mode set to "Rendered".</div>
<div class="t" style="left:394px;top:111px;font-size:16px;font-weight:bold;color:#111;line-height:18px">Command:</div>
<div class="a" style="left:1890px;top:68px;width:21px;height:40px;background:#fbfbfb"></div>
<div class="a" style="left:1890px;top:108px;width:21px;height:24px;background:#fbfbfb;border-left:1px solid #ccc"></div>
<svg class="a" style="left:1894px;top:110px" width="12" height="20"><path d="M2 7 L6 3 L10 7Z M2 13 L6 17 L10 13Z" fill="#222"/></svg>
<div class="a" style="left:375px;top:136px;width:1545px;height:1px;background:#aab"></div>
<div class="a" style="left:384px;top:137px;width:1527px;height:167px;background:#d9e1e3"></div>
<div class="a" style="left:388px;top:143px;width:1px;height:63px;background:#888"></div><div class="a" style="left:391px;top:143px;width:1px;height:63px;background:#888"></div>
<div class="a" style="left:393px;top:161px;width:1518px;height:45px;background:linear-gradient(#a1c5a9,#b9d1c1 35%,#d3dcda 75%,#d9e0e1)"></div>
<div class="a" style="left:393px;top:160px;width:1518px;height:2px;background:#555"></div>
<div class="a" style="left:375px;top:206px;width:1545px;height:1px;background:#a9aeb0"></div>
<svg class="a" style="left:394px;top:143px" width="78" height="19"><path d="M0.5 18 L9.9 1.5 Q10.8 0.5 13.5 0.5 L72.0 0.5 Q76.5 0.5 76.5 5 L76.5 18" fill="url(#tg)" stroke="#555" stroke-width="1"/></svg><div class="t" style="left:403px;top:144px;font-size:13.5px;color:#1a1a38;line-height:18px;letter-spacing:0.15px;-webkit-text-stroke:0.15px #1a1a38">Standard</div>
<svg class="a" style="left:470px;top:143px" width="75" height="19"><path d="M0.5 18 L9.9 1.5 Q10.8 0.5 13.5 0.5 L69.0 0.5 Q73.5 0.5 73.5 5 L73.5 18" fill="#d3e3e7" stroke="#555" stroke-width="1"/></svg><div class="t" style="left:481px;top:144px;font-size:13.5px;color:#1a1a38;line-height:18px;letter-spacing:0.15px;-webkit-text-stroke:0.15px #1a1a38">CPlanes</div>
<svg class="a" style="left:543px;top:143px" width="77" height="19"><path d="M0.5 18 L9.9 1.5 Q10.8 0.5 13.5 0.5 L71.0 0.5 Q75.5 0.5 75.5 5 L75.5 18" fill="#d3e3e7" stroke="#555" stroke-width="1"/></svg><div class="t" style="left:554px;top:144px;font-size:13.5px;color:#1a1a38;line-height:18px;letter-spacing:0.15px;-webkit-text-stroke:0.15px #1a1a38">Set View</div>
<svg class="a" style="left:618px;top:143px" width="69" height="19"><path d="M0.5 18 L9.9 1.5 Q10.8 0.5 13.5 0.5 L63.0 0.5 Q67.5 0.5 67.5 5 L67.5 18" fill="#d3e3e7" stroke="#555" stroke-width="1"/></svg><div class="t" style="left:629px;top:144px;font-size:13.5px;color:#1a1a38;line-height:18px;letter-spacing:0.15px;-webkit-text-stroke:0.15px #1a1a38">Display</div>
<svg class="a" style="left:685px;top:143px" width="64" height="19"><path d="M0.5 18 L9.9 1.5 Q10.8 0.5 13.5 0.5 L58.0 0.5 Q62.5 0.5 62.5 5 L62.5 18" fill="#d3e3e7" stroke="#555" stroke-width="1"/></svg><div class="t" style="left:697px;top:144px;font-size:13.5px;color:#1a1a38;line-height:18px;letter-spacing:0.15px;-webkit-text-stroke:0.15px #1a1a38">Select</div>
<svg class="a" style="left:747px;top:143px" width="120" height="19"><path d="M0.5 18 L9.9 1.5 Q10.8 0.5 13.5 0.5 L114.0 0.5 Q118.5 0.5 118.5 5 L118.5 18" fill="#d3e3e7" stroke="#555" stroke-width="1"/></svg><div class="t" style="left:757px;top:144px;font-size:13.5px;color:#1a1a38;line-height:18px;letter-spacing:0.15px;-webkit-text-stroke:0.15px #1a1a38">Viewport Layout</div>
<svg class="a" style="left:865px;top:143px" width="71" height="19"><path d="M0.5 18 L9.9 1.5 Q10.8 0.5 13.5 0.5 L65.0 0.5 Q69.5 0.5 69.5 5 L69.5 18" fill="#d3e3e7" stroke="#555" stroke-width="1"/></svg><div class="t" style="left:873px;top:144px;font-size:13.5px;color:#1a1a38;line-height:18px;letter-spacing:0.15px;-webkit-text-stroke:0.15px #1a1a38">Visibility</div>
<svg class="a" style="left:934px;top:143px" width="84" height="19"><path d="M0.5 18 L9.9 1.5 Q10.8 0.5 13.5 0.5 L78.0 0.5 Q82.5 0.5 82.5 5 L82.5 18" fill="#d3e3e7" stroke="#555" stroke-width="1"/></svg><div class="t" style="left:945px;top:144px;font-size:13.5px;color:#1a1a38;line-height:18px;letter-spacing:0.15px;-webkit-text-stroke:0.15px #1a1a38">Transform</div>
<svg class="a" style="left:1016px;top:143px" width="97" height="19"><path d="M0.5 18 L9.9 1.5 Q10.8 0.5 13.5 0.5 L91.0 0.5 Q95.5 0.5 95.5 5 L95.5 18" fill="#d3e3e7" stroke="#555" stroke-width="1"/></svg><div class="t" style="left:1027px;top:144px;font-size:13.5px;color:#1a1a38;line-height:18px;letter-spacing:0.15px;-webkit-text-stroke:0.15px #1a1a38">Curve Tools</div>
<svg class="a" style="left:1111px;top:143px" width="108" height="19"><path d="M0.5 18 L9.9 1.5 Q10.8 0.5 13.5 0.5 L102.0 0.5 Q106.5 0.5 106.5 5 L106.5 18" fill="#d3e3e7" stroke="#555" stroke-width="1"/></svg><div class="t" style="left:1122px;top:144px;font-size:13.5px;color:#1a1a38;line-height:18px;letter-spacing:0.15px;-webkit-text-stroke:0.15px #1a1a38">Surface Tools</div>
<svg class="a" style="left:1217px;top:143px" width="92" height="19"><path d="M0.5 18 L9.9 1.5 Q10.8 0.5 13.5 0.5 L86.0 0.5 Q90.5 0.5 90.5 5 L90.5 18" fill="#d3e3e7" stroke="#555" stroke-width="1"/></svg><div class="t" style="left:1227px;top:144px;font-size:13.5px;color:#1a1a38;line-height:18px;letter-spacing:0.15px;-webkit-text-stroke:0.15px #1a1a38">Solid Tools</div>
<svg class="a" style="left:1307px;top:143px" width="94" height="19"><path d="M0.5 18 L9.9 1.5 Q10.8 0.5 13.5 0.5 L88.0 0.5 Q92.5 0.5 92.5 5 L92.5 18" fill="#d3e3e7" stroke="#555" stroke-width="1"/></svg><div class="t" style="left:1317px;top:144px;font-size:13.5px;color:#1a1a38;line-height:18px;letter-spacing:0.15px;-webkit-text-stroke:0.15px #1a1a38">Mesh Tools</div>
<svg class="a" style="left:1399px;top:143px" width="106" height="19"><path d="M0.5 18 L9.9 1.5 Q10.8 0.5 13.5 0.5 L100.0 0.5 Q104.5 0.5 104.5 5 L104.5 18" fill="#d3e3e7" stroke="#555" stroke-width="1"/></svg><div class="t" style="left:1410px;top:144px;font-size:13.5px;color:#1a1a38;line-height:18px;letter-spacing:0.15px;-webkit-text-stroke:0.15px #1a1a38">Render Tools</div>
<svg class="a" style="left:1503px;top:143px" width="72" height="19"><path d="M0.5 18 L9.9 1.5 Q10.8 0.5 13.5 0.5 L66.0 0.5 Q70.5 0.5 70.5 5 L70.5 18" fill="#d3e3e7" stroke="#555" stroke-width="1"/></svg><div class="t" style="left:1515px;top:144px;font-size:13.5px;color:#1a1a38;line-height:18px;letter-spacing:0.15px;-webkit-text-stroke:0.15px #1a1a38">Drafting</div>
<svg class="a" style="left:1573px;top:143px" width="86" height="19"><path d="M0.5 18 L9.9 1.5 Q10.8 0.5 13.5 0.5 L80.0 0.5 Q84.5 0.5 84.5 5 L84.5 18" fill="#d3e3e7" stroke="#555" stroke-width="1"/></svg><div class="t" style="left:1585px;top:144px;font-size:13.5px;color:#1a1a38;line-height:18px;letter-spacing:0.15px;-webkit-text-stroke:0.15px #1a1a38">New in V5</div>
<svg class="a" style="left:1891px;top:141px" width="18" height="18"><circle cx="9" cy="9" r="6" fill="none" stroke="#888" stroke-width="2.2" stroke-dasharray="2 1.6"/><circle cx="9" cy="9" r="4.6" fill="none" stroke="#999" stroke-width="0.8"/><circle cx="9" cy="9" r="1.5" fill="none" stroke="#888" stroke-width="0.8"/></svg>
<svg class="a" style="left:1891px;top:211px" width="18" height="18"><circle cx="9" cy="9" r="6" fill="none" stroke="#888" stroke-width="2.2" stroke-dasharray="2 1.6"/><circle cx="9" cy="9" r="4.6" fill="none" stroke="#999" stroke-width="0.8"/><circle cx="9" cy="9" r="1.5" fill="none" stroke="#888" stroke-width="0.8"/></svg>
<div class="a" style="left:388px;top:213px;width:1px;height:60px;background:#888"></div><div class="a" style="left:391px;top:213px;width:1px;height:60px;background:#888"></div>
<div class="a" style="left:393px;top:231px;width:1518px;height:73px;background:linear-gradient(#a1c5a9,#b9d1c1 25%,#d3dcda 50%,#d9e0e1 60%,#d9e0e1)"></div>
<div class="a" style="left:393px;top:230px;width:1518px;height:2px;background:#555"></div>
<svg class="a" style="left:394px;top:213px" width="58" height="19"><path d="M0.5 18 L9.9 1.5 Q10.8 0.5 13.5 0.5 L52.0 0.5 Q56.5 0.5 56.5 5 L56.5 18" fill="#d3e3e7" stroke="#555" stroke-width="1"/></svg><div class="t" style="left:404px;top:214px;font-size:13.5px;color:#1a1a38;line-height:18px;letter-spacing:0.15px;-webkit-text-stroke:0.15px #1a1a38">SubD</div>
<svg class="a" style="left:450px;top:213px" width="73" height="19"><path d="M0.5 18 L9.9 1.5 Q10.8 0.5 13.5 0.5 L67.0 0.5 Q71.5 0.5 71.5 5 L71.5 18" fill="#d3e3e7" stroke="#555" stroke-width="1"/></svg><div class="t" style="left:460px;top:214px;font-size:13.5px;color:#1a1a38;line-height:18px;letter-spacing:0.15px;-webkit-text-stroke:0.15px #1a1a38">Emboss</div>
<svg class="a" style="left:521px;top:213px" width="63" height="19"><path d="M0.5 18 L9.9 1.5 Q10.8 0.5 13.5 0.5 L57.0 0.5 Q61.5 0.5 61.5 5 L61.5 18" fill="url(#tg)" stroke="#555" stroke-width="1"/></svg><div class="t" style="left:531px;top:214px;font-size:13.5px;color:#1a1a38;line-height:18px;letter-spacing:0.15px;-webkit-text-stroke:0.15px #1a1a38">Sculpt</div>
<div class="a" style="left:432px;top:236px;width:1px;height:30px;background:#b8c4c0"></div>
<svg class="a" style="left:386px;top:279px" width="98" height="26"><path d="M0.5 25 L13.8 1.5 Q15.0 0.5 18.8 0.5 L92.0 0.5 Q96.5 0.5 96.5 5 L96.5 25" fill="#d3e3e7" stroke="#555" stroke-width="1"/></svg><div class="t" style="left:399px;top:280px;font-size:14.5px;color:#1a1a38;line-height:25px;letter-spacing:0.15px;-webkit-text-stroke:0.15px #1a1a38">Perspective</div>
<svg class="a" style="left:482px;top:279px" width="126" height="26"><path d="M0.5 25 L13.8 1.5 Q15.0 0.5 18.8 0.5 L120.0 0.5 Q124.5 0.5 124.5 5 L124.5 25" fill="#d3e3e7" stroke="#555" stroke-width="1"/></svg><div class="t" style="left:496px;top:280px;font-size:14.5px;color:#1a1a38;line-height:25px;letter-spacing:0.15px;-webkit-text-stroke:0.15px #1a1a38">Through Finger</div>
<svg class="a" style="left:606px;top:279px" width="86" height="26"><path d="M0.5 25 L13.8 1.5 Q15.0 0.5 18.8 0.5 L80.0 0.5 Q84.5 0.5 84.5 5 L84.5 25" fill="#d3e3e7" stroke="#555" stroke-width="1"/></svg><div class="t" style="left:620px;top:280px;font-size:14.5px;color:#1a1a38;line-height:25px;letter-spacing:0.15px;-webkit-text-stroke:0.15px #1a1a38">Side View</div>
<svg class="a" style="left:690px;top:279px" width="122" height="26"><path d="M0.5 25 L13.8 1.5 Q15.0 0.5 18.8 0.5 L116.0 0.5 Q120.5 0.5 120.5 5 L120.5 25" fill="url(#tg)" stroke="#555" stroke-width="1"/></svg><div class="t" style="left:705px;top:280px;font-size:14.5px;color:#1a1a38;line-height:25px;letter-spacing:0.15px;-webkit-text-stroke:0.15px #1a1a38">Looking Down</div>
<svg class="a" style="left:810px;top:279px" width="40" height="26"><path d="M0.5 25 L13.8 1.5 Q15.0 0.5 18.8 0.5 L34.0 0.5 Q38.5 0.5 38.5 5 L38.5 25" fill="#d9e1e3" stroke="#555" stroke-width="1"/></svg><div class="t" style="left:0px;top:280px;font-size:14.5px;color:#1a1a38;line-height:25px;letter-spacing:0.15px;-webkit-text-stroke:0.15px #1a1a38"></div>
<svg class="a" style="left:826px;top:285px" width="14" height="14"><path d="M5.5 1.5 H8.5 V5.5 H12.5 V8.5 H8.5 V12.5 H5.5 V8.5 H1.5 V5.5 H5.5Z" fill="none" stroke="#666" stroke-width="1"/></svg>
<div class="a" style="left:386px;top:303px;width:1525px;height:2px;background:#444"></div>
<svg class="a" style="left:0;top:160px" width="1600" height="110"><defs><radialGradient id="sph" cx="35%" cy="30%" r="70%"><stop offset="0" stop-color="#fff"/><stop offset="0.5" stop-color="#999"/><stop offset="1" stop-color="#222"/></radialGradient><radialGradient id="bsph" cx="35%" cy="30%" r="70%"><stop offset="0" stop-color="#9cf"/><stop offset="0.45" stop-color="#1848c0"/><stop offset="1" stop-color="#001060"/></radialGradient><radialGradient id="rsph" cx="40%" cy="35%" r="70%"><stop offset="0" stop-color="#fff"/><stop offset="0.6" stop-color="#ddd"/><stop offset="1" stop-color="#777"/></radialGradient><linearGradient id="pg" x1="0" y1="0" x2="1" y2="1"><stop offset="0" stop-color="#fff"/><stop offset="1" stop-color="#ccc"/></linearGradient></defs><path d="M400.5 8.5 L413 8.5 L419 14.5 L419 31.5 L400.5 31.5Z" fill="url(#pg)" stroke="#222" stroke-width="1.2"/><path d="M433 14 L440 12 L444 14 L456 14 L456 20 L459 20 L454 30 L433 30Z" fill="#f0c020" stroke="#333" stroke-width="1"/><path d="M437 20 L460 20 L454 30 L433 30Z" fill="#ffd84a" stroke="#333" stroke-width="1"/><rect x="468.5" y="8.5" width="24" height="23" rx="1.5" fill="#b8a860" stroke="#222" stroke-width="1.2"/><rect x="472" y="9" width="17" height="9" fill="#ddd"/><rect x="474" y="22" width="13" height="9" fill="#888"/><rect x="476" y="24" width="3" height="5" fill="#b8a860"/><path d="M490 37 L497 37 L497 30Z" fill="#555"/><path d="M506 16 L510 8 L524 8 L521 16Z" fill="#eee" stroke="#333"/><rect x="502" y="15.5" width="25" height="14" rx="2" fill="#999" stroke="#222" stroke-width="1.2"/><path d="M503 20 H526 M503 24 H526" stroke="#eee" stroke-width="1.3"/><path d="M540.5 12.5 L554 12.5 L554 28 L548 31.5 L540.5 31.5Z" fill="url(#pg)" stroke="#222" stroke-width="1.2"/><path d="M547 14 L558 8 M558 6 L565 6 L565 12" stroke="#333" stroke-width="2" fill="none"/><path d="M578 10 L592 28 M593 10 L579 28" stroke="#222" stroke-width="1.3"/><ellipse cx="578" cy="29" rx="3" ry="2" fill="none" stroke="#556"/><ellipse cx="593" cy="29" rx="3" ry="2" fill="none" stroke="#556"/><path d="M612.5 8.5 L622 8.5 L625 12 L625 26 L612.5 26Z" fill="#fff" stroke="#222"/><path d="M618.5 14.5 L627 14.5 L630 18 L630 31.5 L618.5 31.5Z" fill="#eee" stroke="#222"/><rect x="646.5" y="10.5" width="17" height="20" rx="2.5" fill="#f8e890" stroke="#222" stroke-width="1.2"/><rect x="651" y="8" width="8" height="4" rx="1" fill="#ccc" stroke="#333" stroke-width="0.8"/><path d="M684 20 C690 12, 700 12, 704 18" stroke="#222" stroke-width="2.5" fill="none"/><path d="M678 21 L688 14 L688 24Z" fill="#111"/><path d="M697 37 L704 37 L704 30Z" fill="#555"/><path d="M715 18 L719 28 L730 32 L735 22 L735 12 L733 11 L732 18 L731 9 L729 8 L728 17 L727 8 L725 8 L724 17 L723 10 L721 10 L721 21 L717 16Z" fill="#fafafa" stroke="#333" stroke-width="1"/><ellipse cx="760" cy="20" rx="13" ry="4" fill="none" stroke="#999" stroke-width="0.9"/><ellipse cx="760" cy="20" rx="3" ry="12" fill="none" stroke="#777" stroke-width="0.9"/><path d="M755 22 L760 18 L765 18" stroke="#111" stroke-width="2"/><circle cx="799" cy="17" r="7" fill="#e8f0e8" stroke="#333" stroke-width="1.3"/><path d="M793 22 L785 30" stroke="#222" stroke-width="2.5"/><path d="M796 15 H802 M799 12 V18 M796 20 H802" stroke="#222" stroke-width="1"/><rect x="824" y="8" width="18" height="16" fill="none" stroke="#333" stroke-dasharray="2 1.5" stroke-width="1"/><circle cx="828" cy="22" r="6.5" fill="#e8f0e8" stroke="#333" stroke-width="1.2"/><path d="M823 27 L818 32" stroke="#222" stroke-width="2.5"/><circle cx="866" cy="18" r="8" fill="#e8f0e8" stroke="#333" stroke-width="1.2"/><path d="M860 24 L854 30" stroke="#222" stroke-width="2.5"/><path d="M853 8 h5 M853 8 v5 M879 8 h-5 M879 8 v5 M853 32 h5 M853 32 v-5 M879 32 h-5 M879 32 v-5" stroke="#111" stroke-width="2"/><circle cx="903" cy="18" r="8.5" fill="#e8f0e8" stroke="#333" stroke-width="1.2"/><circle cx="901" cy="21" r="3" fill="#e0d020"/><circle cx="905" cy="16" r="3" fill="#e0d020"/><path d="M896 25 L890 31" stroke="#222" stroke-width="2.5"/><path d="M928 15 C934 8, 944 8, 948 14" stroke="#222" stroke-width="2.5" fill="none"/><path d="M924 16 L932 10 L933 19Z" fill="#111"/><circle cx="937" cy="23" r="6" fill="#e8f0e8" stroke="#333" stroke-width="1.2"/><path d="M932 28 L928 32" stroke="#222" stroke-width="2.5"/><path d="M947 37 L954 37 L954 30Z" fill="#555"/><rect x="958" y="9" width="25" height="22" fill="#c8c8c8" stroke="#111" stroke-width="1.6"/><path d="M970.5 9 V31 M958 20 H983" stroke="#111" stroke-width="1.6"/><path d="M981 37 L988 37 L988 30Z" fill="#555"/><path d="M993 22 C994 18, 998 18, 1000 18 L1003 14 L1011 14 L1014 18 C1018 18, 1019 20, 1019 23 L993 24Z" fill="#e01818"/><circle cx="998" cy="24" r="2.5" fill="#222"/><circle cx="1013" cy="24" r="2.5" fill="#222"/><path d="M992 27 H1022" stroke="#aaa" stroke-width="0.8"/><path d="M1016 37 L1023 37 L1023 30Z" fill="#555"/><path d="M1030 20 L1044 13 L1058 20 L1044 28Z M1035 22 L1049 15 M1040 25 L1054 18 M1037 16 L1051 24 M1033 18 L1047 26" fill="none" stroke="#999" stroke-width="0.6"/><rect x="1040" y="20" width="4" height="4" fill="#fff" stroke="#111"/><path d="M1044 22 L1050 24" stroke="#d02020"/><path d="M1043 20 L1044 14" stroke="#20a020"/><path d="M1051 37 L1058 37 L1058 30Z" fill="#555"/><circle cx="1076" cy="20" r="11" fill="none" stroke="#888" stroke-width="1"/><circle cx="1076" cy="20" r="2" fill="#fff" stroke="#333"/><path d="M1078 20 H1088" stroke="#333" stroke-width="1"/><path d="M1086 37 L1093 37 L1093 30Z" fill="#555"/><circle cx="1106" cy="17" r="4" fill="#f0c800" stroke="#b08020" stroke-width="0.5"/><rect x="1113" y="14" width="7" height="7" fill="#f0d000" stroke="#b08020" stroke-width="0.8"/><path d="M1108 29 L1111 23 L1115 29Z" fill="none" stroke="#d07020" stroke-width="1"/><path d="M1116 8 h4 v4 M1098 28 v4 h4" stroke="#111" stroke-width="1.2" fill="none"/><path d="M1121 37 L1128 37 L1128 30Z" fill="#555"/><path d="M1139 24 C1133 18, 1134 8, 1146 8 C1158 8, 1159 18, 1153 24 L1152 29 L1140 29Z" fill="url(#rsph)" stroke="#777" stroke-width="0.8"/><rect x="1141" y="28" width="10" height="3" fill="#777"/><path d="M1156 37 L1163 37 L1163 30Z" fill="#555"/><path d="M1176 18 V13 C1176 8, 1186 8, 1186 13 V18" stroke="#333" stroke-width="2" fill="none"/><rect x="1172.5" y="17.5" width="17" height="13" rx="1.5" fill="#ccc" stroke="#333" stroke-width="1.2"/><path d="M1174 22 H1188 M1174 26 H1188" stroke="#999"/><path d="M1191 37 L1198 37 L1198 30Z" fill="#555"/><path d="M1204 13 L1216 10 L1227 13 L1225 27 L1214 32 L1204 25Z" fill="#2a3aa8"/><path d="M1204 13 L1216 10 L1227 13 L1225 22 L1214 27 L1204 20Z" fill="#fff"/><path d="M1204 13 L1216 10 L1227 13 L1225 18 L1214 23 L1204 17Z" fill="#f04a10"/><path d="M1226 37 L1233 37 L1233 30Z" fill="#555"/><circle cx="1251" cy="20" r="10" fill="none" stroke="url(#cw)" stroke-width="4"/><circle cx="1251" cy="20" r="10" fill="none" stroke="#e02020" stroke-width="4" stroke-dasharray="10 53"/><circle cx="1251" cy="20" r="10" fill="none" stroke="#20c040" stroke-width="4" stroke-dasharray="0 21 10 32"/><circle cx="1251" cy="20" r="10" fill="none" stroke="#2040e0" stroke-width="4" stroke-dasharray="0 42 10 11"/><circle cx="1251" cy="20" r="10" fill="none" stroke="#f0e020" stroke-width="4" stroke-dasharray="0 11 10 42"/><circle cx="1251" cy="20" r="10" fill="none" stroke="#20d0e0" stroke-width="4" stroke-dasharray="0 32 10 21"/><circle cx="1251" cy="20" r="10" fill="none" stroke="#e020e0" stroke-width="4" stroke-dasharray="0 53 10 0"/><path d="M1261 37 L1268 37 L1268 30Z" fill="#555"/><circle cx="1286" cy="20" r="11" fill="url(#sph)"/><path d="M1286 9 V31 M1275 20 C1280 23, 1292 23, 1297 20" stroke="#333" stroke-width="1" fill="none"/><rect x="1306" y="6" width="29" height="29" fill="none" stroke="#aab" stroke-dasharray="1 2" stroke-width="0.6"/><circle cx="1321" cy="20" r="11" fill="url(#sph)"/><path d="M1321 9 V31 M1310 20 C1315 23, 1327 23, 1332 20" stroke="#333" stroke-width="1" fill="none"/><path d="M1331 37 L1338 37 L1338 30Z" fill="#555"/><circle cx="1356" cy="20" r="11" fill="url(#bsph)"/><path d="M1366 37 L1373 37 L1373 30Z" fill="#555"/><ellipse cx="1384" cy="26" rx="10" ry="6" fill="#e8efea" opacity="0.8"/><path d="M1386 16 L1403 9 L1397 27Z" fill="#f0a020" stroke="#a06010" stroke-width="0.7"/><path d="M1401 37 L1408 37 L1408 30Z" fill="#555"/><circle cx="1427" cy="20" r="10" fill="#f0c040" stroke="#704010" stroke-width="3" stroke-dasharray="3 2.2"/><circle cx="1427" cy="20" r="7" fill="#f0c040"/><rect x="1424" y="14" width="6" height="11" rx="1" fill="#aaa" stroke="#444" stroke-width="0.7"/><path d="M1436 37 L1443 37 L1443 30Z" fill="#555"/><path d="M1450 8 H1460 M1451 8 V20 M1450 20 H1463 L1462 30 M1462 30 V20 M1475 25 V31 M1465 30 H1474" stroke="#111" stroke-width="1.3" fill="none"/><circle cx="1461" cy="8" r="1.5" fill="#fff" stroke="#111"/><circle cx="1463" cy="20" r="1.5" fill="#fff" stroke="#111"/><circle cx="1475" cy="23" r="1.5" fill="#fff" stroke="#111"/><path d="M1471 37 L1478 37 L1478 30Z" fill="#555"/><circle cx="1497" cy="20" r="12" fill="url(#bsph)"/><text x="1491" y="28" font-size="19" font-weight="bold" fill="#fff" font-family="Liberation Serif">?</text><path d="M1506 37 L1513 37 L1513 30Z" fill="#555"/><circle cx="410" cy="90" r="11" fill="#e02828"/><path d="M414 81 C404 80, 402 88, 409 90 C417 92, 413 99, 404 97" stroke="#fff" stroke-width="3" fill="none"/><circle cx="453" cy="90" r="10.5" fill="url(#rsph)" stroke="#888" stroke-width="0.8"/><path d="M448 95 C452 92, 456 86, 460 84 C462 88, 458 94, 452 97Z" fill="#e02020"/><circle cx="488" cy="90" r="10.5" fill="url(#rsph)" stroke="#888" stroke-width="0.8"/><path d="M482 92 C488 90, 492 86, 496 82 C498 86, 494 92, 486 94Z" fill="#e02020"/><circle cx="523" cy="90" r="10.5" fill="url(#rsph)" stroke="#888" stroke-width="0.8"/><path d="M514 84 C520 82, 528 88, 531 96 C526 94, 518 90, 514 86Z" fill="#e02020"/><circle cx="558" cy="90" r="10.5" fill="url(#rsph)" stroke="#888" stroke-width="0.8"/><path d="M551 96 C554 90, 560 84, 565 82 C567 88, 562 94, 553 98Z" fill="#e02020"/><path d="M593 84 C590 90, 586 92, 588 98 C590 102, 597 102, 598 98 C600 92, 596 90, 593 84Z" fill="url(#rsph)" stroke="#888" stroke-width="0.8"/><path d="M583 82 L588 85 L586 80Z M603 82 L598 85 L600 80Z" fill="#e02020"/><path d="M620 86 C618 80, 626 78, 630 81 C634 78, 640 82, 638 87 C641 91, 637 97, 633 95 C630 100, 622 99, 622 95 C617 95, 616 89, 620 86Z" fill="url(#rsph)" stroke="#888" stroke-width="0.8"/><circle cx="663" cy="90" r="10.5" fill="url(#rsph)" stroke="#888" stroke-width="0.8"/><path d="M668 84 C658 82, 654 90, 664 91 C672 92, 668 98, 656 96" stroke="#e02020" stroke-width="2.6" fill="none"/><circle cx="695" cy="94" r="7" fill="url(#rsph)" stroke="#888" stroke-width="0.8"/><path d="M697 88 L701 82" stroke="#bbb" stroke-width="3"/><path d="M699 80 L706 78 L702 84Z" fill="#e02020"/></svg>
<div class="a" style="left:375px;top:137px;width:0;height:0"></div>
<svg class="a" style="left:386px;top:304px" width="1525" height="706" viewBox="386 304 1525 706"><rect x="386" y="304" width="1525" height="706" fill="#000"/><line x1="572.1" y1="325.88" x2="1623.9" y2="325.88" stroke="#202020" stroke-width="1.6"/><line x1="572.1" y1="352.17" x2="1623.9" y2="352.17" stroke="#515151" stroke-width="1.6"/><line x1="572.1" y1="378.47" x2="1623.9" y2="378.47" stroke="#202020" stroke-width="1.6"/><line x1="572.1" y1="404.76" x2="1623.9" y2="404.76" stroke="#202020" stroke-width="1.6"/><line x1="572.1" y1="431.06" x2="1623.9" y2="431.06" stroke="#202020" stroke-width="1.6"/><line x1="572.1" y1="457.35" x2="1623.9" y2="457.35" stroke="#202020" stroke-width="1.6"/><line x1="572.1" y1="483.65" x2="1623.9" y2="483.65" stroke="#515151" stroke-width="1.6"/><line x1="572.1" y1="509.94" x2="1623.9" y2="509.94" stroke="#202020" stroke-width="1.6"/><line x1="572.1" y1="536.24" x2="1623.9" y2="536.24" stroke="#202020" stroke-width="1.6"/><line x1="572.1" y1="562.53" x2="1623.9" y2="562.53" stroke="#202020" stroke-width="1.6"/><line x1="572.1" y1="588.83" x2="1623.9" y2="588.83" stroke="#202020" stroke-width="1.6"/><line x1="572.1" y1="615.12" x2="1623.9" y2="615.12" stroke="#515151" stroke-width="1.6"/><line x1="572.1" y1="641.42" x2="1623.9" y2="641.42" stroke="#202020" stroke-width="1.6"/><line x1="572.1" y1="667.72" x2="1623.9" y2="667.72" stroke="#202020" stroke-width="1.6"/><line x1="572.1" y1="694.01" x2="1623.9" y2="694.01" stroke="#202020" stroke-width="1.6"/><line x1="572.1" y1="720.31" x2="1623.9" y2="720.31" stroke="#202020" stroke-width="1.6"/><line x1="572.1" y1="746.60" x2="1623.9" y2="746.60" stroke="#515151" stroke-width="1.6"/><line x1="572.1" y1="772.89" x2="1623.9" y2="772.89" stroke="#202020" stroke-width="1.6"/><line x1="572.1" y1="799.19" x2="1623.9" y2="799.19" stroke="#202020" stroke-width="1.6"/><line x1="572.1" y1="825.49" x2="1623.9" y2="825.49" stroke="#202020" stroke-width="1.6"/><line x1="572.1" y1="851.78" x2="1623.9" y2="851.78" stroke="#202020" stroke-width="1.6"/><line x1="572.1" y1="878.08" x2="1623.9" y2="878.08" stroke="#515151" stroke-width="1.6"/><line x1="572.1" y1="904.37" x2="1623.9" y2="904.37" stroke="#202020" stroke-width="1.6"/><line x1="572.1" y1="930.67" x2="1623.9" y2="930.67" stroke="#202020" stroke-width="1.6"/><line x1="572.1" y1="956.96" x2="1623.9" y2="956.96" stroke="#202020" stroke-width="1.6"/><line x1="572.1" y1="983.26" x2="1623.9" y2="983.26" stroke="#202020" stroke-width="1.6"/><line x1="572.1" y1="1009.55" x2="1623.9" y2="1009.55" stroke="#515151" stroke-width="1.6"/><line x1="572.10" y1="304" x2="572.10" y2="1010" stroke="#585858" stroke-width="1.5"/><line x1="598.39" y1="304" x2="598.39" y2="1010" stroke="#2d2d2d" stroke-width="1.5"/><line x1="624.69" y1="304" x2="624.69" y2="1010" stroke="#2d2d2d" stroke-width="1.5"/><line x1="650.99" y1="304" x2="650.99" y2="1010" stroke="#2d2d2d" stroke-width="1.5"/><line x1="677.28" y1="304" x2="677.28" y2="1010" stroke="#2d2d2d" stroke-width="1.5"/><line x1="703.58" y1="304" x2="703.58" y2="1010" stroke="#585858" stroke-width="1.5"/><line x1="729.87" y1="304" x2="729.87" y2="1010" stroke="#2d2d2d" stroke-width="1.5"/><line x1="756.17" y1="304" x2="756.17" y2="1010" stroke="#2d2d2d" stroke-width="1.5"/><line x1="782.46" y1="304" x2="782.46" y2="1010" stroke="#2d2d2d" stroke-width="1.5"/><line x1="808.76" y1="304" x2="808.76" y2="1010" stroke="#2d2d2d" stroke-width="1.5"/><line x1="835.05" y1="304" x2="835.05" y2="1010" stroke="#585858" stroke-width="1.5"/><line x1="861.35" y1="304" x2="861.35" y2="1010" stroke="#2d2d2d" stroke-width="1.5"/><line x1="887.64" y1="304" x2="887.64" y2="1010" stroke="#2d2d2d" stroke-width="1.5"/><line x1="913.94" y1="304" x2="913.94" y2="1010" stroke="#2d2d2d" stroke-width="1.5"/><line x1="940.23" y1="304" x2="940.23" y2="1010" stroke="#2d2d2d" stroke-width="1.5"/><line x1="966.53" y1="304" x2="966.53" y2="1010" stroke="#585858" stroke-width="1.5"/><line x1="992.82" y1="304" x2="992.82" y2="1010" stroke="#2d2d2d" stroke-width="1.5"/><line x1="1019.12" y1="304" x2="1019.12" y2="1010" stroke="#2d2d2d" stroke-width="1.5"/><line x1="1045.41" y1="304" x2="1045.41" y2="1010" stroke="#2d2d2d" stroke-width="1.5"/><line x1="1071.71" y1="304" x2="1071.71" y2="1010" stroke="#2d2d2d" stroke-width="1.5"/><line x1="1098.00" y1="304" x2="1098.00" y2="1010" stroke="#585858" stroke-width="1.5"/><line x1="1124.30" y1="304" x2="1124.30" y2="1010" stroke="#2d2d2d" stroke-width="1.5"/><line x1="1150.59" y1="304" x2="1150.59" y2="1010" stroke="#2d2d2d" stroke-width="1.5"/><line x1="1176.89" y1="304" x2="1176.89" y2="1010" stroke="#2d2d2d" stroke-width="1.5"/><line x1="1203.18" y1="304" x2="1203.18" y2="1010" stroke="#2d2d2d" stroke-width="1.5"/><line x1="1229.48" y1="304" x2="1229.48" y2="1010" stroke="#585858" stroke-width="1.5"/><line x1="1255.77" y1="304" x2="1255.77" y2="1010" stroke="#2d2d2d" stroke-width="1.5"/><line x1="1282.07" y1="304" x2="1282.07" y2="1010" stroke="#2d2d2d" stroke-width="1.5"/><line x1="1308.36" y1="304" x2="1308.36" y2="1010" stroke="#2d2d2d" stroke-width="1.5"/><line x1="1334.66" y1="304" x2="1334.66" y2="1010" stroke="#2d2d2d" stroke-width="1.5"/><line x1="1360.95" y1="304" x2="1360.95" y2="1010" stroke="#585858" stroke-width="1.5"/><line x1="1387.25" y1="304" x2="1387.25" y2="1010" stroke="#2d2d2d" stroke-width="1.5"/><line x1="1413.54" y1="304" x2="1413.54" y2="1010" stroke="#2d2d2d" stroke-width="1.5"/><line x1="1439.84" y1="304" x2="1439.84" y2="1010" stroke="#2d2d2d" stroke-width="1.5"/><line x1="1466.13" y1="304" x2="1466.13" y2="1010" stroke="#2d2d2d" stroke-width="1.5"/><line x1="1492.43" y1="304" x2="1492.43" y2="1010" stroke="#585858" stroke-width="1.5"/><line x1="1518.72" y1="304" x2="1518.72" y2="1010" stroke="#2d2d2d" stroke-width="1.5"/><line x1="1545.02" y1="304" x2="1545.02" y2="1010" stroke="#2d2d2d" stroke-width="1.5"/><line x1="1571.31" y1="304" x2="1571.31" y2="1010" stroke="#2d2d2d" stroke-width="1.5"/><line x1="1597.61" y1="304" x2="1597.61" y2="1010" stroke="#2d2d2d" stroke-width="1.5"/><line x1="1623.90" y1="304" x2="1623.90" y2="1010" stroke="#585858" stroke-width="1.5"/><line x1="1098" y1="304" x2="1098" y2="746" stroke="#1fb3c0" stroke-width="2"/><line x1="1098" y1="746.6" x2="1623.9" y2="746.6" stroke="#b01a0a" stroke-width="2.8"/><g stroke="#e6d7b8" stroke-width="1.4" fill="none"><line x1="955.5" y1="363" x2="955.5" y2="560"/><line x1="1195.5" y1="363" x2="1195.5" y2="560"/><line x1="960" y1="377" x2="1190" y2="377"/><line x1="876" y1="398.5" x2="1068" y2="398.5"/><line x1="876" y1="815" x2="1098" y2="815"/><line x1="889.5" y1="404" x2="889.5" y2="808"/><line x1="1098" y1="746" x2="1098" y2="815" stroke="#7a7060"/></g><g fill="#e6d7b8"><path d="M956 377 L982 370.5 L982 383.5Z"/><path d="M1195 377 L1169 370.5 L1169 383.5Z"/><path d="M889.5 399 L883 425 L896 425Z"/><path d="M889.5 814 L883 788 L896 788Z"/></g><g transform="translate(1043.2,370.2)" stroke="#e6d7b8" stroke-width="2.5" fill="none" stroke-linecap="round"><g transform="translate(0,0)"><ellipse cx="8.4" cy="-17.3" rx="7.9" ry="8"/><path d="M16.3 -17.3 C16.5 -6, 13.5 -0.9, 8.2 -0.9 C4.5 -0.9, 1.8 -2.8, 1 -5.8"/></g><g transform="translate(23,0)"><rect x="-0.3" y="-2.8" width="3" height="3" fill="#e6d7b8" stroke="none"/></g><g transform="translate(32.5,0)"><path d="M0.3 -17.8 C4 -19.5, 7 -22, 8.4 -25.3 L8.4 0"/></g><g transform="translate(50.8,0)"><path d="M1 -19.3 C1.8 -23.5, 4.8 -25.3, 8.3 -25.3 C12.7 -25.3, 16 -22.5, 16 -18 C16 -13.5, 12 -10.5, 0.5 -1 L16.6 -1"/></g></g><g transform="translate(882.5,645) rotate(-90)" stroke="#e6d7b8" stroke-width="2.5" fill="none" stroke-linecap="round"><g transform="translate(0,0)"><path d="M0.3 -17.8 C4 -19.5, 7 -22, 8.4 -25.3 L8.4 0"/></g><g transform="translate(17,0)"><path d="M15.8 -24.6 L2.6 -24.6 L1.4 -13.3 C3.4 -15.4, 5.8 -16.3, 8.6 -16.3 C13.6 -16.3, 16.8 -12.8, 16.8 -8.2 C16.8 -3.2, 13.3 -0.5, 8.6 -0.5 C4.6 -0.5, 1.7 -2.5, 0.7 -5.5"/></g><g transform="translate(39.5,0)"><rect x="-0.3" y="-2.8" width="3" height="3" fill="#e6d7b8" stroke="none"/></g><g transform="translate(48,0)"><ellipse cx="8.2" cy="-19.1" rx="6.6" ry="6"/><ellipse cx="8.2" cy="-7.2" rx="7.8" ry="6.6"/></g><g transform="translate(67.3,0)"><path d="M1.2 -20.2 C2.2 -23.6, 5 -25.3, 8.2 -25.3 C12.3 -25.3, 15 -22.8, 15 -19.2 C15 -15.6, 12.3 -13.4, 7.2 -13.4 C12.8 -13.4, 16.2 -10.6, 16.2 -6.6 C16.2 -2.6, 13 -0.4, 8.2 -0.4 C4.2 -0.4, 1.3 -2.5, 0.4 -6"/></g></g><path d="M1033 501.5 Q1075 484 1119 501.5 Q1150 478 1182 468 Q1198 492 1196 520 Q1194 538 1182 551 Q1198 572 1197 600 Q1194 650 1150 678 Q1134 688 1118.5 692.5 L1123 698 L1157 731.5 Q1168 731 1185 733 Q1236 742 1246 785 Q1252 830 1212 852 Q1185 862 1150 850 Q1126 843 1126 833 Q1128 822 1140 827 Q1165 838 1195 834 Q1228 826 1227 790 Q1223 757 1169 752 Q1172 770 1168 786 Q1155 812 1075 815 Q990 813 980 775 Q976 755 998 735 L1029 698 L1032.5 692.5 Q1016 688 1000 678 Q956 650 954 600 Q953 572 966 551 Q956 538 955 520 Q953 492 968 470 Q1000 478 1033 501.5 Z" stroke="#e6d7b8" fill="none" stroke-width="1.9" stroke-linejoin="round"/><path d="M972 490 Q990 492 1002 502 Q986 510 973 523 Q969 506 972 490Z" stroke="#e6d7b8" fill="none" stroke-width="1.9" stroke-linejoin="round"/><path d="M1178 490 Q1160 492 1149 502 Q1164 510 1177 523 Q1181 506 1178 490Z" stroke="#e6d7b8" fill="none" stroke-width="1.9" stroke-linejoin="round"/><path d="M963 566 Q990 560 1012 573 Q990 574 962 585 Q960 575 963 566Z" stroke="#e6d7b8" fill="none" stroke-width="1.9" stroke-linejoin="round"/><path d="M961 603 Q988 597 1006.5 607 Q985 608 964 618 Q959 610 961 603Z" stroke="#e6d7b8" fill="none" stroke-width="1.9" stroke-linejoin="round"/><path d="M973 635.6 Q1000 625 1019 633 Q1000 636 982 650 Q975 642 973 635.6Z" stroke="#e6d7b8" fill="none" stroke-width="1.9" stroke-linejoin="round"/><g transform="translate(2150.8,0) scale(-1,1)"><path d="M963 566 Q990 560 1012 573 Q990 574 962 585 Q960 575 963 566Z" stroke="#e6d7b8" fill="none" stroke-width="1.9" stroke-linejoin="round"/><path d="M961 603 Q988 597 1006.5 607 Q985 608 964 618 Q959 610 961 603Z" stroke="#e6d7b8" fill="none" stroke-width="1.9" stroke-linejoin="round"/><path d="M973 635.6 Q1000 625 1019 633 Q1000 636 982 650 Q975 642 973 635.6Z" stroke="#e6d7b8" fill="none" stroke-width="1.9" stroke-linejoin="round"/></g><circle cx="1028.7" cy="606" r="10.8" stroke="#e6d7b8" fill="none" stroke-width="1.9" stroke-linejoin="round"/><circle cx="1120.6" cy="606" r="10.8" stroke="#e6d7b8" fill="none" stroke-width="1.9" stroke-linejoin="round"/><path d="M1054.6 615.6 Q1030 626 1032.5 646 Q1036 672 1075.4 673.5 Q1114 672 1118.3 646 Q1120 626 1096 616.3" stroke="#e6d7b8" fill="none" stroke-width="1.9" stroke-linejoin="round"/><path d="M1054.6 615.6 L1071.7 632 L1071.7 640 Q1071.5 651 1063 651 Q1057 650.5 1056.5 643 Q1055 639 1052.5 641 Q1052 657 1064 657.5 Q1071 657 1075.4 652 Q1080 657 1087 657.5 Q1098.5 657 1098.3 641 Q1095.8 639 1094.3 643 Q1093.5 650.5 1087.5 651 Q1079 651 1078.3 640 L1078.3 632 L1096 616.3" stroke="#e6d7b8" fill="none" stroke-width="1.9" stroke-linejoin="round"/><path d="M1062 612.6 Q1075 606 1089.4 612.6 L1075.4 628 Z" stroke="#e6d7b8" fill="none" stroke-width="1.9" stroke-linejoin="round"/><g stroke="#e6d7b8" stroke-width="1.3"><line x1="981" y1="662.7" x2="1043" y2="662.7"/><line x1="1108" y1="662.7" x2="1170" y2="662.7"/></g><path d="M1075.4 740 Q1066 722 1052 724.5 Q1034 728 1034.5 746 Q1036 762 1075.4 788 Q1114 762 1117 746 Q1117 728 1099 724.5 Q1085 722 1075.4 740Z" stroke="#e6d7b8" fill="none" stroke-width="1.9" stroke-linejoin="round"/><g stroke="#e6d7b8" fill="none" stroke-width="1.3"><circle cx="1074.7" cy="484.3" r="29.5"/><circle cx="1074.7" cy="484.3" r="24.5"/><circle cx="1074.7" cy="484.3" r="19.5"/><path d="M1094.2 484.3 L1104.2 484.3 M1093.5 489.3 L1103.2 491.9 M1091.6 494.1 L1100.2 499.1 M1088.5 498.1 L1095.6 505.2 M1084.5 501.2 L1089.5 509.8 M1079.7 503.1 L1082.3 512.8 M1074.7 503.8 L1074.7 513.8 M1069.7 503.1 L1067.1 512.8 M1065.0 501.2 L1060.0 509.8 M1060.9 498.1 L1053.8 505.2 M1057.8 494.1 L1049.2 499.1 M1055.9 489.3 L1046.2 491.9 M1055.2 484.3 L1045.2 484.3 M1055.9 479.3 L1046.2 476.7 M1057.8 474.6 L1049.2 469.6 M1060.9 470.5 L1053.8 463.4 M1065.0 467.4 L1060.0 458.8 M1069.7 465.5 L1067.1 455.8 M1074.7 464.8 L1074.7 454.8 M1079.7 465.5 L1082.3 455.8 M1084.5 467.4 L1089.5 458.8 M1088.5 470.5 L1095.6 463.4 M1091.6 474.6 L1100.2 469.6 M1093.5 479.3 L1103.2 476.7 " stroke-width="0.9"/></g><rect x="1071" y="399.5" width="11" height="82" rx="5.5" fill="#d4c6a8" stroke="#e6d7b8" stroke-width="1.3"/><path d="M1074 405 V476 M1079 405 V476" stroke="#5a5040" stroke-width="1" stroke-dasharray="2 3"/><ellipse cx="1859.5" cy="355.5" rx="23.5" ry="9" fill="none" stroke="#e6a418" stroke-width="3.5"/><ellipse cx="1859.5" cy="355.5" rx="18" ry="3" fill="none" stroke="#b07a10" stroke-width="1.2"/><path d="M1851 347 L1868 347 L1870 354 L1859.5 370 L1849 354Z" fill="#3a78d0" stroke="#5a98e8" stroke-width="0.8" opacity="0.9"/><path d="M431.5 927 V965" stroke="#1a9aa8" stroke-width="1.5"/><path d="M431.5 964.5 H469" stroke="#a01010" stroke-width="1.5"/><text x="433" y="931" font-size="13" fill="#20b0c0" font-family="Liberation Sans" font-weight="bold">y</text><text x="471" y="967" font-size="13" fill="#e02810" font-family="Liberation Sans" font-weight="bold">x</text></svg>
<svg class="a" style="left:386px;top:304px" width="132" height="26"><path d="M0 0 H130 V20 L125 25 H0Z" fill="#80b48c"/></svg>
<div class="t" style="left:396px;top:306px;font-size:15px;color:#1a1a20">Looking Down</div>
<div class="a" style="left:502px;top:307px;width:1px;height:18px;background:#222"></div>
<svg class="a" style="left:504px;top:313px" width="10" height="6"><path d="M0 0 H9 L4.5 5Z" fill="#222"/></svg>
<div class="a" style="left:375px;top:1010px;width:1545px;height:9px;background:#f1f5f9"></div>
<div class="a" style="left:375px;top:1018px;width:1545px;height:1px;background:#bbb"></div>
<div class="a" style="left:0;top:1019px;width:1920px;height:61px;background:#eef3f3;border-top:1px solid #d8dcdc"></div>
<div class="a" style="left:28px;top:1038px;width:25px;height:25px;border-radius:50%;background:radial-gradient(circle at 40% 30%,#f8c030,#f07010 80%)"></div>
<div class="t" style="left:64px;top:1032px;font-size:14px;color:#1a1a1a">28°C</div>
<div class="t" style="left:64px;top:1051px;font-size:14px;color:#5a5a5a">Sonnig</div>
<svg class="a" style="left:640px;top:1036px" width="30" height="30"><rect x="0" y="0" width="14" height="14" fill="#2aa6ee"/><rect x="15.5" y="0" width="14" height="14" fill="#2ab0f2"/><rect x="0" y="15.5" width="14" height="14" fill="#1e8ad8"/><rect x="15.5" y="15.5" width="14" height="14" fill="#1f96e0"/></svg>
<div class="a" style="left:687px;top:1030px;width:272px;height:40px;border-radius:20px;background:#fafbfb;border:1px solid #dfe3e3"></div>
<svg class="a" style="left:699px;top:1039px" width="22" height="22"><circle cx="9" cy="9" r="6.5" fill="none" stroke="#222" stroke-width="2"/><path d="M14 14 L20 20" stroke="#222" stroke-width="2.2"/></svg>
<div class="t" style="left:731px;top:1039px;font-size:17px;color:#444">Search</div>
<svg class="a" style="left:890px;top:1033px" width="66" height="34"><path d="M4 26 C0 14, 12 6, 24 10 C30 0, 50 2, 54 12 C66 12, 66 30, 56 32 L10 32 C4 32, 2 28, 4 26Z" fill="#7a5a8a"/><rect x="8" y="20" width="50" height="6" fill="#5a3a50"/><path d="M8 26 H58" stroke="#3a6a8a" stroke-width="3"/><path d="M20 14 L34 8 L46 14 Z" fill="#d0c0b0"/><rect x="20" y="14" width="26" height="6" fill="#e0d0c0"/></svg>
<svg class="a" style="left:975px;top:1036px" width="30" height="30"><rect x="10" y="2" width="18" height="18" rx="2" fill="#f4f4f4" stroke="#ccc"/><rect x="2" y="10" width="18" height="18" rx="2" fill="#222"/><rect x="10" y="10" width="10" height="10" fill="#ccc"/></svg>
<svg class="a" style="left:1030px;top:1035px" width="32" height="30"><path d="M1 4 Q1 2 3 2 L11 2 L14 5 L29 5 Q31 5 31 7 L31 28 L1 28Z" fill="#e8b820"/><rect x="1" y="9" width="30" height="19" rx="1" fill="#f8d040"/><rect x="9" y="19" width="14" height="4" rx="1" fill="#2a70c8"/></svg>
<div class="a" style="left:1039px;top:1071px;width:12px;height:3px;border-radius:2px;background:#777"></div>
<svg class="a" style="left:1085px;top:1035px" width="32" height="32"><circle cx="16" cy="16" r="14" fill="#1a8ad0"/><path d="M4 18 C4 8, 24 4, 29 14 C30 20, 24 22, 18 20 C22 16, 18 12, 14 14 C8 18, 12 28, 22 29 C12 32, 4 26, 4 18Z" fill="#48c848"/><path d="M8 22 C6 12, 18 8, 22 14 C16 12, 10 16, 12 24Z" fill="#2aa0e8"/></svg>
<svg class="a" style="left:1140px;top:1033px" width="34" height="34"><path d="M2 2 L26 4 L26 22 L2 20Z" fill="#5a6ad0" stroke="#aab" stroke-width="1"/><path d="M4 5 L24 6 L24 19 L4 18Z" fill="#1a2aa0"/><rect x="6" y="22" width="18" height="3" fill="#ccc"/><circle cx="24" cy="26" r="6" fill="#dde" stroke="#999"/><path d="M21 26 L27 26" stroke="#2a8a4a" stroke-width="1.6"/></svg>
<svg class="a" style="left:1195px;top:1035px" width="32" height="32"><path d="M10 6 C10 1, 22 1, 22 6" stroke="#2a6ad0" stroke-width="2" fill="none"/><rect x="2" y="6" width="28" height="24" rx="3" fill="#1a5ab8"/><rect x="10" y="12" width="5" height="5" fill="#f25022"/><rect x="16" y="12" width="5" height="5" fill="#7fba00"/><rect x="10" y="18" width="5" height="5" fill="#00a4ef"/><rect x="16" y="18" width="5" height="5" fill="#ffb900"/></svg>
<svg class="a" style="left:1250px;top:1034px" width="32" height="32"><rect x="1" y="1" width="30" height="30" fill="#3aa655"/><path d="M4 28 L10 8 L12 20 L20 6 L18 18 L28 5" stroke="#fff" stroke-width="2" fill="none"/><path d="M5 22 L28 12" stroke="#e8f8e8" stroke-width="1"/></svg>
<div class="a" style="left:1259px;top:1071px;width:12px;height:3px;border-radius:2px;background:#777"></div>
<svg class="a" style="left:1524px;top:1042px" width="16" height="12"><path d="M2 9 L8 3 L14 9" stroke="#222" stroke-width="1.6" fill="none"/></svg>
<svg class="a" style="left:1561px;top:1040px" width="24" height="20"><path d="M4 14 C0 14, 0 8, 5 8 C6 3, 14 2, 16 7 C22 6, 23 14, 18 14Z" fill="none" stroke="#333" stroke-width="1.5"/><path d="M3 2 L20 18" stroke="#333" stroke-width="1.5"/></svg>
<svg class="a" style="left:1602px;top:1042px" width="22" height="16"><rect x="1" y="1" width="20" height="13" rx="2" fill="none" stroke="#333" stroke-width="1.3"/><path d="M4 5 H18 M4 8 H18 M6 11 H16" stroke="#333" stroke-width="1" stroke-dasharray="1.5 1.5"/></svg>
<div class="t" style="left:1645px;top:1042px;font-size:14px;color:#222">ENG</div>
<svg class="a" style="left:1697px;top:1040px" width="22" height="22"><circle cx="10" cy="10" r="8.5" fill="none" stroke="#333" stroke-width="1.3"/><ellipse cx="10" cy="10" rx="4" ry="8.5" fill="none" stroke="#333" stroke-width="1"/><path d="M2 10 H18" stroke="#333"/><circle cx="15" cy="15" r="5" fill="#eef3f3" stroke="#333" stroke-width="1.3"/><path d="M12 18 L18 12" stroke="#333"/></svg>
<svg class="a" style="left:1727px;top:1041px" width="22" height="18"><path d="M2 6 H6 L11 2 V16 L6 12 H2Z" fill="none" stroke="#333" stroke-width="1.3"/><path d="M14 6 C16 8, 16 10, 14 12" stroke="#333" fill="none"/><path d="M17 4 C20 7, 20 11, 17 14" stroke="#aaa" fill="none"/></svg>
<svg class="a" style="left:1757px;top:1043px" width="24" height="14"><rect x="1" y="1" width="19" height="12" rx="2.5" fill="none" stroke="#333" stroke-width="1.3"/><rect x="4" y="4" width="11" height="6" fill="#222"/><rect x="20.5" y="5" width="2" height="4" fill="#333"/></svg>
<div class="t" style="left:1797px;top:1031px;font-size:14px;color:#222;direction:rtl">۰۴:۵۴ ب.ظ</div>
<div class="t" style="left:1801px;top:1049px;font-size:14px;color:#222">۱۴۰۴/۰۹/۰۶</div>
<svg class="a" style="left:1874px;top:1038px" width="24" height="24"><path d="M4 18 C6 14, 5 8, 8 6 C10 4, 14 4, 16 6 C19 8, 18 14, 20 18Z" fill="#222"/><rect x="10" y="18" width="4" height="3" rx="1" fill="#222"/><text x="14" y="10" font-size="8" fill="#222" font-family="Liberation Sans" font-weight="bold">z</text><text x="9" y="15" font-size="7" fill="#fff" font-family="Liberation Sans" font-weight="bold">z</text></svg>
<div class="a" style="left:1470px;top:946px;width:450px;height:73px;background:#555;border-top:1px solid #444"></div>
<div class="a" style="left:1471px;top:947px;width:60px;height:71px;background:linear-gradient(#c4c4c4,#8e8e8e 55%,#9a9a9a)"></div>
<div class="a" style="left:1482px;top:963px;width:38px;height:38px;border-radius:50%;background:#d80022;box-shadow:0 0 4px 2px #fff"></div>
<div class="a" style="left:1532px;top:947px;width:36px;height:35px;background:linear-gradient(#6a6a6a,#888)"></div>
<svg class="a" style="left:1536px;top:951px" width="28" height="26"><rect x="1" y="5" width="25" height="18" rx="2" fill="#505a88" stroke="#eee" stroke-width="0.8"/><path d="M8 5 L10 1 L17 1 L19 5Z" fill="#505a88"/><circle cx="13" cy="14" r="7" fill="#2a3050"/><circle cx="13" cy="14" r="4.5" fill="#7a9ae0"/><circle cx="22" cy="8" r="1.3" fill="#f0c020"/></svg>
<div class="a" style="left:1532px;top:983px;width:36px;height:35px;background:linear-gradient(#bdbdbd,#9a9a9a)"></div>
<div class="a" style="left:1540px;top:991px;width:7px;height:19px;background:#3f80c0;box-shadow:0 0 3px #fff"></div><div class="a" style="left:1551px;top:991px;width:7px;height:19px;background:#3f80c0;box-shadow:0 0 3px #fff"></div>
<div class="a" style="left:1568px;top:947px;width:99px;height:71px;background:#000"></div>
<svg class="a" style="left:1568px;top:947px" width="99" height="71"><path d="M9 25.5 L5.5 25.5 L5.5 45 L9 45 M13 25.5 L16.5 25.5 L16.5 45 L13 45 M15 28 L7 43" stroke="#0b8a10" stroke-width="1.2" fill="none"/><path d="M23.5 25.5 L20.0 25.5 L20.0 45 L23.5 45 M27.5 25.5 L31.0 25.5 L31.0 45 L27.5 45 M29.5 28 L21.5 43" stroke="#0b8a10" stroke-width="1.2" fill="none"/><path d="M40 25.5 L36.5 25.5 L36.5 45 L40 45 M44 25.5 L47.5 25.5 L47.5 45 L44 45 M46 28 L38 43" stroke="#0b8a10" stroke-width="1.2" fill="none"/><path d="M54 25.5 L50.5 25.5 L50.5 45 L54 45 M58 25.5 L61.5 25.5 L61.5 45 L58 45 M60 28 L52 43" stroke="#0b8a10" stroke-width="1.2" fill="none"/><path d="M71 25.5 L67.5 25.5 L67.5 45 L71 45 M75 25.5 L78.5 25.5 L78.5 45 L75 45 M77 28 L69 43" stroke="#0b8a10" stroke-width="1.2" fill="none"/><path d="M85 25.5 L81.5 25.5 L81.5 45 L85 45 M89 25.5 L92.5 25.5 L92.5 45 L89 45 M91 28 L83 43" stroke="#0b8a10" stroke-width="1.2" fill="none"/><rect x="33" y="31" width="1.5" height="1.5" fill="#0b8a10"/><rect x="33" y="41" width="1.5" height="1.5" fill="#0b8a10"/><rect x="64.5" y="31" width="1.5" height="1.5" fill="#0b8a10"/><rect x="64.5" y="41" width="1.5" height="1.5" fill="#0b8a10"/></svg>
<div class="a" style="left:1667px;top:947px;width:144px;height:35px;background:linear-gradient(#c8c8c8,#888)"></div>
<div class="t" style="left:1691px;top:954px;font-family:'Liberation Serif';font-size:19px;color:#fff;text-shadow:0 0 1px #000,1px 1px 1px #000,0 0 3px #000">1920 × 1080</div>
<div class="a" style="left:1811px;top:947px;width:36px;height:35px;background:linear-gradient(#e8e8e8,#c8c8c8)"></div>
<div class="a" style="left:1819px;top:955px;width:20px;height:18px;border:3px solid #22cc22"></div>
<div class="a" style="left:1847px;top:947px;width:36px;height:35px;background:linear-gradient(#bbb,#8a8a8a);border-left:1px solid #666"></div>
<div class="a" style="left:1857px;top:968px;width:16px;height:3px;background:#3a80d0"></div>
<div class="a" style="left:1883px;top:947px;width:37px;height:35px;background:linear-gradient(#bbb,#8a8a8a);border-left:1px solid #666"></div>
<svg class="a" style="left:1892px;top:956px" width="18" height="18"><path d="M2 2 L16 16 M16 2 L2 16" stroke="#e0102a" stroke-width="2.6"/></svg>
<div class="a" style="left:1667px;top:983px;width:36px;height:35px;background:linear-gradient(#f4f4f4,#e0e0e0);border-left:1px solid #666"></div>
<div class="a" style="left:1703px;top:983px;width:36px;height:35px;background:linear-gradient(#b8b8b8,#9a9a9a);border-left:1px solid #666"></div>
<div class="a" style="left:1739px;top:983px;width:36px;height:35px;background:linear-gradient(#b8b8b8,#9a9a9a);border-left:1px solid #666"></div>
<div class="a" style="left:1775px;top:983px;width:36px;height:35px;background:linear-gradient(#b8b8b8,#9a9a9a);border-left:1px solid #666"></div>
<div class="a" style="left:1811px;top:983px;width:36px;height:35px;background:linear-gradient(#b8b8b8,#9a9a9a);border-left:1px solid #666"></div>
<div class="a" style="left:1847px;top:983px;width:36px;height:35px;background:linear-gradient(#b8b8b8,#9a9a9a);border-left:1px solid #666"></div>
<div class="a" style="left:1883px;top:983px;width:37px;height:35px;background:linear-gradient(#b8b8b8,#9a9a9a);border-left:1px solid #666"></div>
<svg class="a" style="left:1670px;top:986px" width="30" height="30"><path d="M3 11 H8 L15 5 V25 L8 19 H3Z" fill="#8ac0e8" stroke="#3a7ab8" stroke-width="1.3"/><path d="M18 10 C21 13, 21 17, 18 20 M21 7 C26 11, 26 19, 21 23 M24 4 C31 10, 31 20, 24 26" stroke="#3a7ab8" stroke-width="1.8" fill="none"/></svg>
<svg class="a" style="left:1709px;top:986px" width="26" height="30"><rect x="8" y="2" width="9" height="17" rx="4.5" fill="#aad0f0" stroke="#3a7ab8" stroke-width="1.3"/><path d="M5 13 C5 22, 20 22, 20 13 M12.5 21 V26 M7 27 H18" stroke="#3a7ab8" stroke-width="1.6" fill="none"/></svg>
<svg class="a" style="left:1743px;top:986px" width="28" height="30"><circle cx="14" cy="13" r="10" fill="#6a90b8" stroke="#4a6a90" stroke-width="1.2"/><circle cx="14" cy="13" r="6" fill="#3a78c8"/><path d="M11 12 Q14 9 17 12" stroke="#fff" fill="none"/><path d="M7 26 L21 26 L18 22 L10 22Z" fill="#5a7090"/></svg>
<svg class="a" style="left:1784px;top:988px" width="20" height="26"><path d="M2 2 L2 20 L7 15 L11 23 L14 21 L10 14 L17 14Z" fill="#111" stroke="#fff" stroke-width="1"/></svg>
<svg class="a" style="left:1815px;top:986px" width="30" height="30"><path d="M6 20 L20 4 L26 9 L11 25Z" fill="#2a80d0"/><path d="M6 20 L11 25 L4 27Z" fill="#f0d0a0"/><path d="M4 27 L5 25 L6 26Z" fill="#333"/></svg>
<svg class="a" style="left:1851px;top:988px" width="30" height="26"><path d="M2 4 L11 4 L13 7 L22 7 L22 22 L2 22Z" fill="#d8b020"/><path d="M5 11 L28 11 L24 22 L2 22Z" fill="#f0d040"/></svg>
<svg class="a" style="left:1888px;top:987px" width="28" height="28"><circle cx="14" cy="14" r="9" fill="#5a7890" stroke="#5a7890" stroke-width="5" stroke-dasharray="4 3"/><circle cx="14" cy="14" r="4" fill="#ddd"/></svg>
</body></html>
